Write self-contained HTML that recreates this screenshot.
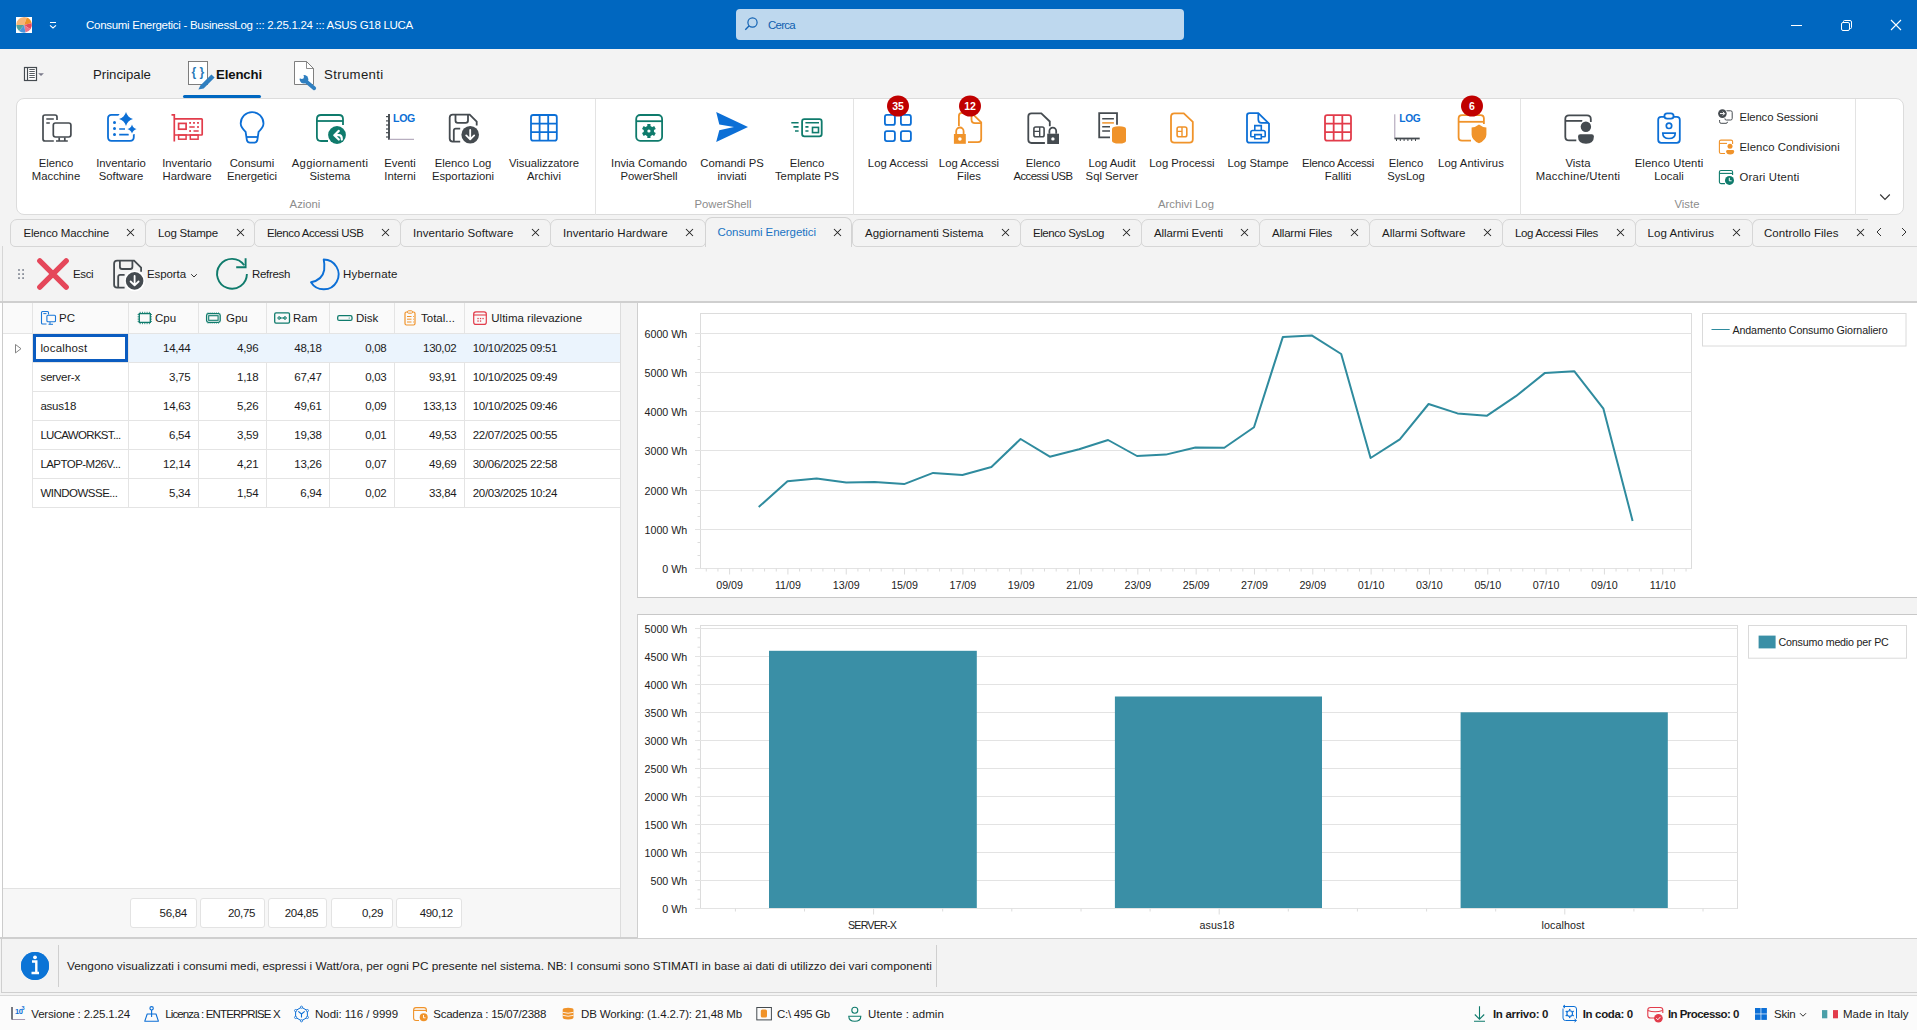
<!DOCTYPE html>
<html><head><meta charset="utf-8"><style>
html,body{margin:0;padding:0;width:1917px;height:1030px;overflow:hidden;background:#f3f3f3;font-family:"Liberation Sans",sans-serif;}
.b{position:absolute;}
.t{position:absolute;white-space:pre;}
svg.b{overflow:visible}
</style></head><body>
<div class="b" style="left:0px;top:0px;width:1917px;height:49px;background:#0067c0"></div>
<div class="b" style="left:736px;top:9px;width:448px;height:31px;background:#bed8ee;border-radius:4px"></div>
<div class="b" style="left:0px;top:49px;width:1917px;height:49px;background:#f3f3f3"></div>
<div class="b" style="left:183px;top:95px;width:78px;height:3px;background:#0067c0;border-radius:2px"></div>
<div class="b" style="left:16px;top:98px;width:1888px;height:117px;background:#fff;border:1px solid #dcdcdc;border-radius:8px;box-sizing:border-box"></div>
<div class="b" style="left:595px;top:99px;width:1px;height:116px;background:#e3e3e3"></div>
<div class="b" style="left:853px;top:99px;width:1px;height:116px;background:#e3e3e3"></div>
<div class="b" style="left:1520px;top:99px;width:1px;height:116px;background:#e3e3e3"></div>
<div class="b" style="left:1855px;top:99px;width:1px;height:116px;background:#e3e3e3"></div>
<div class="b" style="left:2px;top:246px;width:1915px;height:57px;background:#f3f3f3;border-left:1px solid #d6d6d6;box-sizing:border-box"></div>
<div class="b" style="left:1868px;top:246px;width:49px;height:1px;background:#d6d6d6"></div>
<div class="b" style="left:10px;top:219px;width:136px;height:28px;background:#f3f3f3;border:1px solid #d6d6d6;border-radius:7px 7px 5px 5px;box-sizing:border-box"></div>
<svg class="b" style="left:126px;top:228px" width="9" height="9" viewBox="0 0 9 9"><path d="M1 1L8 8M8 1L1 8" stroke="#222" stroke-width="1.05"/></svg>
<div class="b" style="left:145px;top:219px;width:110px;height:28px;background:#f3f3f3;border:1px solid #d6d6d6;border-radius:7px 7px 5px 5px;box-sizing:border-box"></div>
<svg class="b" style="left:236px;top:228px" width="9" height="9" viewBox="0 0 9 9"><path d="M1 1L8 8M8 1L1 8" stroke="#222" stroke-width="1.05"/></svg>
<div class="b" style="left:254px;top:219px;width:147px;height:28px;background:#f3f3f3;border:1px solid #d6d6d6;border-radius:7px 7px 5px 5px;box-sizing:border-box"></div>
<svg class="b" style="left:381px;top:228px" width="9" height="9" viewBox="0 0 9 9"><path d="M1 1L8 8M8 1L1 8" stroke="#222" stroke-width="1.05"/></svg>
<div class="b" style="left:400px;top:219px;width:151px;height:28px;background:#f3f3f3;border:1px solid #d6d6d6;border-radius:7px 7px 5px 5px;box-sizing:border-box"></div>
<svg class="b" style="left:531px;top:228px" width="9" height="9" viewBox="0 0 9 9"><path d="M1 1L8 8M8 1L1 8" stroke="#222" stroke-width="1.05"/></svg>
<div class="b" style="left:550px;top:219px;width:156px;height:28px;background:#f3f3f3;border:1px solid #d6d6d6;border-radius:7px 7px 5px 5px;box-sizing:border-box"></div>
<svg class="b" style="left:685px;top:228px" width="9" height="9" viewBox="0 0 9 9"><path d="M1 1L8 8M8 1L1 8" stroke="#222" stroke-width="1.05"/></svg>
<div class="b" style="left:705px;top:217px;width:147px;height:30px;background:#f3f3f3;border:1px solid #d3d3d3;border-bottom:none;border-radius:7px 7px 0 0;box-sizing:border-box"></div>
<svg class="b" style="left:833px;top:228px" width="9" height="9" viewBox="0 0 9 9"><path d="M1 1L8 8M8 1L1 8" stroke="#222" stroke-width="1.05"/></svg>
<div class="b" style="left:852px;top:219px;width:169px;height:28px;background:#f3f3f3;border:1px solid #d6d6d6;border-radius:7px 7px 5px 5px;box-sizing:border-box"></div>
<svg class="b" style="left:1001px;top:228px" width="9" height="9" viewBox="0 0 9 9"><path d="M1 1L8 8M8 1L1 8" stroke="#222" stroke-width="1.05"/></svg>
<div class="b" style="left:1020px;top:219px;width:122px;height:28px;background:#f3f3f3;border:1px solid #d6d6d6;border-radius:7px 7px 5px 5px;box-sizing:border-box"></div>
<svg class="b" style="left:1122px;top:228px" width="9" height="9" viewBox="0 0 9 9"><path d="M1 1L8 8M8 1L1 8" stroke="#222" stroke-width="1.05"/></svg>
<div class="b" style="left:1141px;top:219px;width:119px;height:28px;background:#f3f3f3;border:1px solid #d6d6d6;border-radius:7px 7px 5px 5px;box-sizing:border-box"></div>
<svg class="b" style="left:1240px;top:228px" width="9" height="9" viewBox="0 0 9 9"><path d="M1 1L8 8M8 1L1 8" stroke="#222" stroke-width="1.05"/></svg>
<div class="b" style="left:1259px;top:219px;width:111px;height:28px;background:#f3f3f3;border:1px solid #d6d6d6;border-radius:7px 7px 5px 5px;box-sizing:border-box"></div>
<svg class="b" style="left:1350px;top:228px" width="9" height="9" viewBox="0 0 9 9"><path d="M1 1L8 8M8 1L1 8" stroke="#222" stroke-width="1.05"/></svg>
<div class="b" style="left:1369px;top:219px;width:134px;height:28px;background:#f3f3f3;border:1px solid #d6d6d6;border-radius:7px 7px 5px 5px;box-sizing:border-box"></div>
<svg class="b" style="left:1483px;top:228px" width="9" height="9" viewBox="0 0 9 9"><path d="M1 1L8 8M8 1L1 8" stroke="#222" stroke-width="1.05"/></svg>
<div class="b" style="left:1502px;top:219px;width:134px;height:28px;background:#f3f3f3;border:1px solid #d6d6d6;border-radius:7px 7px 5px 5px;box-sizing:border-box"></div>
<svg class="b" style="left:1616px;top:228px" width="9" height="9" viewBox="0 0 9 9"><path d="M1 1L8 8M8 1L1 8" stroke="#222" stroke-width="1.05"/></svg>
<div class="b" style="left:1635px;top:219px;width:118px;height:28px;background:#f3f3f3;border:1px solid #d6d6d6;border-radius:7px 7px 5px 5px;box-sizing:border-box"></div>
<svg class="b" style="left:1732px;top:228px" width="9" height="9" viewBox="0 0 9 9"><path d="M1 1L8 8M8 1L1 8" stroke="#222" stroke-width="1.05"/></svg>
<div class="b" style="left:1752px;top:219px;width:116px;height:28px;background:#f3f3f3;border:1px solid #d6d6d6;border-right:none;border-radius:7px 0 0 5px;box-sizing:border-box"></div>
<svg class="b" style="left:1856px;top:228px" width="9" height="9" viewBox="0 0 9 9"><path d="M1 1L8 8M8 1L1 8" stroke="#222" stroke-width="1.05"/></svg>
<svg class="b" style="left:1875px;top:227px" width="9" height="10" viewBox="0 0 9 10"><path d="M6 1L2 5L6 9" fill="none" stroke="#333" stroke-width="1"/></svg>
<svg class="b" style="left:1899px;top:227px" width="9" height="10" viewBox="0 0 9 10"><path d="M3 1L7 5L3 9" fill="none" stroke="#333" stroke-width="1"/></svg>
<div class="b" style="left:0px;top:302px;width:637px;height:636px;background:#fff"></div>
<div class="b" style="left:0px;top:301px;width:1917px;height:2px;background:#cfcfcf"></div>
<div class="b" style="left:2px;top:302px;width:1px;height:636px;background:#cccccc"></div>
<div class="b" style="left:3px;top:303px;width:617px;height:30px;background:#fafafa"></div>
<div class="b" style="left:32px;top:333px;width:588px;height:1px;background:#e4e4e4"></div>
<div class="b" style="left:32px;top:362px;width:588px;height:1px;background:#e4e4e4"></div>
<div class="b" style="left:32px;top:391px;width:588px;height:1px;background:#e4e4e4"></div>
<div class="b" style="left:32px;top:420px;width:588px;height:1px;background:#e4e4e4"></div>
<div class="b" style="left:32px;top:449px;width:588px;height:1px;background:#e4e4e4"></div>
<div class="b" style="left:32px;top:478px;width:588px;height:1px;background:#e4e4e4"></div>
<div class="b" style="left:32px;top:507px;width:588px;height:1px;background:#e4e4e4"></div>
<div class="b" style="left:3px;top:333px;width:30px;height:1px;background:#e4e4e4"></div>
<div class="b" style="left:32px;top:303px;width:1px;height:204px;background:#e4e4e4"></div>
<div class="b" style="left:128px;top:303px;width:1px;height:204px;background:#e4e4e4"></div>
<div class="b" style="left:198px;top:303px;width:1px;height:204px;background:#e4e4e4"></div>
<div class="b" style="left:266px;top:303px;width:1px;height:204px;background:#e4e4e4"></div>
<div class="b" style="left:329px;top:303px;width:1px;height:204px;background:#e4e4e4"></div>
<div class="b" style="left:394px;top:303px;width:1px;height:204px;background:#e4e4e4"></div>
<div class="b" style="left:464px;top:303px;width:1px;height:204px;background:#e4e4e4"></div>
<div class="b" style="left:620px;top:303px;width:1px;height:635px;background:#dcdcdc"></div>
<div class="b" style="left:621px;top:303px;width:16px;height:635px;background:#f3f3f3"></div>
<div class="b" style="left:129px;top:334px;width:491px;height:28px;background:#ebf4fd"></div>
<div class="b" style="left:33px;top:334px;width:95px;height:28px;background:#fff;border:3px solid #0b5cc0;box-sizing:border-box"></div>
<div class="b" style="left:3px;top:888px;width:617px;height:50px;background:#f7f7f7;border-top:1px solid #e2e2e2;box-sizing:border-box"></div>
<div class="b" style="left:130px;top:898px;width:67px;height:30px;background:#fff;border:1px solid #e3e3e3;border-radius:3px;box-sizing:border-box"></div>
<div class="b" style="left:200px;top:898px;width:65px;height:30px;background:#fff;border:1px solid #e3e3e3;border-radius:3px;box-sizing:border-box"></div>
<div class="b" style="left:268px;top:898px;width:59px;height:30px;background:#fff;border:1px solid #e3e3e3;border-radius:3px;box-sizing:border-box"></div>
<div class="b" style="left:331px;top:898px;width:62px;height:30px;background:#fff;border:1px solid #e3e3e3;border-radius:3px;box-sizing:border-box"></div>
<div class="b" style="left:396px;top:898px;width:66px;height:30px;background:#fff;border:1px solid #e3e3e3;border-radius:3px;box-sizing:border-box"></div>
<div class="b" style="left:0px;top:937px;width:1917px;height:2px;background:#cfcfcf"></div>
<div class="b" style="left:637px;top:303px;width:1280px;height:295px;background:#fff;border-left:1px solid #cfcfcf;border-bottom:1px solid #c8c8c8;box-sizing:border-box"></div>
<div class="b" style="left:637px;top:614px;width:1280px;height:324px;background:#fff;border-left:1px solid #cfcfcf;border-top:1px solid #c8c8c8;box-sizing:border-box"></div>
<div class="b" style="left:0px;top:939px;width:1917px;height:55px;background:#f3f3f3;box-sizing:border-box"></div>
<div class="b" style="left:1px;top:939px;width:1px;height:54px;background:#cfcfcf"></div>
<div class="b" style="left:1px;top:992px;width:1916px;height:1px;background:#cfcfcf"></div>
<div class="b" style="left:58px;top:945px;width:1px;height:42px;background:#cfcfcf"></div>
<div class="b" style="left:21px;top:952px;width:28px;height:28px;background:#0c74d6;border-radius:50%"></div>
<div class="b" style="left:936px;top:945px;width:1px;height:42px;background:#cfcfcf"></div>
<div class="b" style="left:0px;top:995px;width:1917px;height:35px;background:#fbfbfb;border-top:1px solid #d8d8d8;box-sizing:border-box"></div>
<svg class="b" style="left:0;top:0" width="1917" height="1030" viewBox="0 0 1917 1030"><rect x="16" y="17" width="16" height="16" fill="#fff"/><path d="M24.1 24.9 L16.30 24.90 A7.8 7.8 0 0 1 26.77 17.57 Z" fill="#f7b577"/><path d="M24.1 24.9 L26.77 17.57 A7.8 7.8 0 0 1 31.63 22.88 Z" fill="#ef9329"/><path d="M24.1 24.9 L31.63 22.88 A7.8 7.8 0 0 1 30.49 29.37 Z" fill="#e64a5c"/><path d="M24.1 24.9 L30.49 29.37 A7.8 7.8 0 0 1 25.45 32.58 Z" fill="#ef7387"/><path d="M24.1 24.9 L25.45 32.58 A7.8 7.8 0 0 1 19.09 30.88 Z" fill="#4b96dc"/><path d="M24.1 24.9 L19.09 30.88 A7.8 7.8 0 0 1 16.30 24.90 Z" fill="#4fa29d"/><path d="M50 22.5H56M50 25.3L53 28L56 25.3" fill="none" stroke="#fff" stroke-width="1.1"/><circle cx="752.5" cy="22.5" r="4.6" fill="none" stroke="#1262b3" stroke-width="1.2"/><path d="M749.2 25.8L745.3 29.7" stroke="#1262b3" stroke-width="1.3"/><path d="M1791 25.5H1802" stroke="#fff" stroke-width="1"/><rect x="1841.5" y="22.5" width="8" height="8" rx="1.5" fill="none" stroke="#fff" stroke-width="1"/><path d="M1843.5 22.5V21.5Q1843.5 20.5 1844.5 20.5H1850Q1851.5 20.5 1851.5 22V27.5Q1851.5 28.5 1850.5 28.5H1849.5" fill="none" stroke="#fff" stroke-width="1"/><path d="M1891 20L1901 30M1901 20L1891 30" stroke="#fff" stroke-width="1.1"/><rect x="24.5" y="67.5" width="12" height="13" fill="#fff" stroke="#454b50" stroke-width="1.2"/><path d="M27.5 67.5V80.5" stroke="#454b50" stroke-width="1.2"/><path d="M29.3 69.5H34.8" stroke="#454b50" stroke-width="0.9"/><path d="M29.3 71.5H34.8" stroke="#454b50" stroke-width="0.9"/><path d="M29.3 73.5H34.8" stroke="#454b50" stroke-width="0.9"/><path d="M29.3 75.5H34.8" stroke="#454b50" stroke-width="0.9"/><path d="M29.3 77.5H34.8" stroke="#454b50" stroke-width="0.9"/><path d="M38.2 73.2H43.9L41 75.9Z" fill="#7a7a8a"/><rect x="188.5" y="61.5" width="19" height="23" fill="#fff" stroke="#707070" stroke-width="0.9"/><text x="197.8" y="75.8" font-family="Liberation Sans" font-size="12" font-weight="bold" fill="#2a7ab8" text-anchor="middle">{ }</text><path d="M211.4 74.4L214.6 77.6L203.6 88.6L198.4 89.4L200.4 85.4Z" fill="#2f7fc0"/><path d="M294.5 61.5H306.5L313.5 68.5V84.5H294.5Z" fill="#fff" stroke="#707070" stroke-width="0.9"/><path d="M306.5 61.5V68.5H313.5" fill="none" stroke="#707070" stroke-width="0.8"/><circle cx="304" cy="79.3" r="4.3" fill="#2f7fc0"/><circle cx="301.8" cy="76.8" r="2.2" fill="#fff"/><path d="M306.5 81.8L314.2 88.2" stroke="#2f7fc0" stroke-width="3.8" stroke-linecap="round"/><path d="M53.8 141H45Q43 141 43 139V117Q43 115 45 115H55Q57 115 57 117V120" fill="none" stroke="#454b50" stroke-width="1.7"/><path d="M46.3 119H53.8M46.3 123H49.8" fill="none" stroke="#454b50" stroke-width="1.7"/><rect x="53.3" y="123" width="17.6" height="14" rx="2.2" fill="none" stroke="#454b50" stroke-width="1.7"/><path d="M59.2 137.5V140.3M64.8 137.5V140.3M56 141H67.8" fill="none" stroke="#454b50" stroke-width="1.7"/><path d="M121 114.9H111.5Q108 114.9 108 118.5V137Q108 140.8 111.5 140.8H130Q133.8 140.8 133.8 137V134" fill="none" stroke="#0c6fd6" stroke-width="1.8"/><circle cx="114.5" cy="122.6" r="1.5" fill="#0c6fd6"/><circle cx="114.5" cy="128.4" r="1.5" fill="#0c6fd6"/><circle cx="114.5" cy="134.4" r="1.5" fill="#0c6fd6"/><path d="M119.2 122.6H121.5M119.2 129H125M119.2 134.7H128.7" fill="none" stroke="#0c6fd6" stroke-width="1.7"/><circle cx="126" cy="119" r="8.3" fill="#fff"/><circle cx="132" cy="129" r="5.5" fill="#fff"/><path d="M126 111.9Q127.54 117.36 133 118.9Q127.54 120.44000000000001 126 125.9Q124.46 120.44000000000001 119 118.9Q124.46 117.36 126 111.9Z" fill="#0c6fd6"/><path d="M132 124.4Q133.012 127.988 136.6 129Q133.012 130.012 132 133.6Q130.988 130.012 127.4 129Q130.988 127.988 132 124.4Z" fill="#0c6fd6"/><path d="M171.5 114.9H174.3V141.6" fill="none" stroke="#e23c4b" stroke-width="1.7"/><path d="M174.3 118.9H201.5Q202.2 118.9 202.2 119.6V134.3Q202.2 135 201.5 135H174.3" fill="none" stroke="#e23c4b" stroke-width="1.7"/><rect x="178.6" y="123.4" width="7.5" height="5.8" fill="none" stroke="#e23c4b" stroke-width="1.7"/><rect x="178.6" y="135" width="7.5" height="4.2" fill="none" stroke="#e23c4b" stroke-width="1.5"/><rect x="190.3" y="135" width="7.8" height="4.2" fill="none" stroke="#e23c4b" stroke-width="1.5"/><rect x="189.2" y="122.0" width="1.8" height="1.8" fill="#e23c4b"/><rect x="193.1" y="122.0" width="1.8" height="1.8" fill="#e23c4b"/><rect x="197.1" y="122.0" width="1.8" height="1.8" fill="#e23c4b"/><rect x="197.1" y="126.1" width="1.8" height="1.8" fill="#e23c4b"/><rect x="189.2" y="130.1" width="1.8" height="1.8" fill="#e23c4b"/><path d="M189.3 127H194.7M193.5 131H198.7" fill="none" stroke="#e23c4b" stroke-width="1.7"/><path d="M245.6 131.8C242.5 128.8 240.7 126.3 240.7 123.5A11.4 11.4 0 0 1 263.5 123.5C263.5 126.3 261.7 128.8 258.6 131.8L257.3 140.3Q256.7 142.6 254.3 142.6H249.9Q247.5 142.6 246.9 140.3Z" fill="none" stroke="#0c6fd6" stroke-width="1.8"/><path d="M246.3 137H258" fill="none" stroke="#0c6fd6" stroke-width="1.8"/><path d="M328 141H321Q316.9 141 316.9 137V119Q316.9 115 321 115H339Q343 115 343 119V125" fill="none" stroke="#0f7b6c" stroke-width="1.8"/><path d="M316.9 121H343" fill="none" stroke="#0f7b6c" stroke-width="1.8"/><circle cx="337" cy="135" r="10.5" fill="#fff"/><circle cx="337" cy="135" r="8.9" fill="#0f7b6c"/><path d="M338.8 130.9L334.3 135.2L338.8 139.5M334.8 135.2H338.8Q341.8 135.2 341.8 139.2V139.6" fill="none" stroke="#fff" stroke-width="2.2" stroke-linecap="round" stroke-linejoin="round"/><path d="M389 114V139.8" stroke="#454b50" stroke-width="1.9"/><path d="M386 116.6H389" stroke="#454b50" stroke-width="1.2"/><path d="M386 120.9H389" stroke="#454b50" stroke-width="1.2"/><path d="M386 125H389" stroke="#454b50" stroke-width="1.2"/><path d="M386 129H389" stroke="#454b50" stroke-width="1.2"/><path d="M386 132.7H389" stroke="#454b50" stroke-width="1.2"/><path d="M386 137H389" stroke="#454b50" stroke-width="1.2"/><path d="M389 139.3H414" stroke="#9d8fa8" stroke-width="0.9"/><text x="404" y="122.2" font-family="Liberation Sans" font-weight="bold" font-size="10.6" fill="#0c6fd6" text-anchor="middle" letter-spacing="-0.3">LOG</text><g transform="translate(449.2 114.1) scale(1.0)"><path d="M11 27.5H3.5Q0.5 27.5 0.5 24.5V3.5Q0.5 0.5 3.5 0.5H20.5L27.5 7.5V11.5" fill="none" stroke="#454b50" stroke-width="1.8"/><path d="M6.3 0.5V6.5Q6.3 8.8 8.5 8.8H16.5Q18.8 8.8 18.8 6.5V0.5" fill="none" stroke="#454b50" stroke-width="1.8"/><path d="M11 14.6H6.5Q4.6 14.6 4.6 16.5V27.5" fill="none" stroke="#454b50" stroke-width="1.8"/><circle cx="21" cy="20.7" r="10.4" fill="#fff"/><circle cx="21" cy="20.7" r="8.8" fill="#454b50"/><path d="M21 15.8V25M17 21.3L21 25.2L25 21.3" fill="none" stroke="#fff" stroke-width="1.8" stroke-linecap="round" stroke-linejoin="round"/></g><rect x="531" y="115" width="25.799999999999955" height="25.69999999999999" rx="2.2" fill="none" stroke="#0c6fd6" stroke-width="1.8"/><path d="M539.60 115V140.7M531 123.57H556.8" fill="none" stroke="#0c6fd6" stroke-width="1.8"/><path d="M548.20 115V140.7M531 132.13H556.8" fill="none" stroke="#0c6fd6" stroke-width="1.8"/><rect x="636.2" y="115" width="25.9" height="25.8" rx="4" fill="none" stroke="#0f7b6c" stroke-width="1.8"/><path d="M636.2 121.2H662.1" fill="none" stroke="#0f7b6c" stroke-width="1.8"/><rect x="-1.6" y="-7" width="3.2" height="3" transform="translate(648.9 131) rotate(0)" fill="#0f7b6c"/><rect x="-1.6" y="-7" width="3.2" height="3" transform="translate(648.9 131) rotate(60)" fill="#0f7b6c"/><rect x="-1.6" y="-7" width="3.2" height="3" transform="translate(648.9 131) rotate(120)" fill="#0f7b6c"/><rect x="-1.6" y="-7" width="3.2" height="3" transform="translate(648.9 131) rotate(180)" fill="#0f7b6c"/><rect x="-1.6" y="-7" width="3.2" height="3" transform="translate(648.9 131) rotate(240)" fill="#0f7b6c"/><rect x="-1.6" y="-7" width="3.2" height="3" transform="translate(648.9 131) rotate(300)" fill="#0f7b6c"/><circle cx="648.9" cy="131" r="5.2" fill="#0f7b6c"/><circle cx="648.9" cy="131" r="1.6" fill="#fff"/><path d="M716.2 112L748 126.9L716.2 142L719.3 130.2L734 127L719.3 124.6Z" fill="#0c6fd6"/><rect x="802.1" y="119.2" width="19.6" height="17.2" rx="2.3" fill="none" stroke="#0f7b6c" stroke-width="1.8"/><path d="M791.3 122.7H798.6M793.4 126.9H798.6M795 131H798.6M805.4 122.7H819M805.4 126.9H808.5M805.4 131H808.5" fill="none" stroke="#0f7b6c" stroke-width="1.6"/><rect x="812.5" y="127.4" width="6" height="5.2" fill="none" stroke="#0f7b6c" stroke-width="1.6"/><rect x="884.9" y="114.9" width="10" height="10" rx="2" fill="none" stroke="#0c6fd6" stroke-width="1.8"/><rect x="884.9" y="131.1" width="10" height="10" rx="2" fill="none" stroke="#0c6fd6" stroke-width="1.8"/><rect x="900.9" y="114.9" width="10" height="10" rx="2" fill="none" stroke="#0c6fd6" stroke-width="1.8"/><rect x="900.9" y="131.1" width="10" height="10" rx="2" fill="none" stroke="#0c6fd6" stroke-width="1.8"/><path d="M958.9 126V116Q958.9 112.8 962 112.8H971.5L981.2 122.3V139Q981.2 142.2 978 142.2H968" fill="none" stroke="#f0932a" stroke-width="1.8"/><path d="M971.5 113V119.5Q971.5 123.1 975 123.1H981" fill="none" stroke="#f0932a" stroke-width="1.8"/><path d="M956.2 134V131.2A3.7 3.7 0 0 1 963.6 131.2V134" fill="none" stroke="#f0932a" stroke-width="1.8"/><rect x="953.9" y="134" width="11.9" height="9.8" fill="#f0932a"/><circle cx="959.9" cy="139" r="1.8" fill="#fff"/><path d="M1044.9 143H1031.5Q1028.3 143 1028.3 139.8V116.5Q1028.3 113.3 1031.5 113.3H1041.3L1049.8 121.5V126.2" fill="none" stroke="#454b50" stroke-width="1.8"/><rect x="1033.9" y="127" width="10.2" height="9.8" rx="1.8" fill="none" stroke="#454b50" stroke-width="1.6"/><path d="M1039.7 127V136.8M1033.9 131.4H1039.7" fill="none" stroke="#454b50" stroke-width="1.4"/><path d="M1049.4 133.7V131A3.4 3.4 0 0 1 1056.2 131V133.7" fill="none" stroke="#454b50" stroke-width="1.8"/><rect x="1047.2" y="133.7" width="11.8" height="10.3" fill="#454b50"/><circle cx="1052.9" cy="138.9" r="1.7" fill="#fff"/><path d="M1110 137.3H1099.2V113.2H1117V126" fill="none" stroke="#454b50" stroke-width="1.8"/><path d="M1102.2 118.7H1113.9M1102.2 126.8H1110M1102.2 130.9H1110" fill="none" stroke="#454b50" stroke-width="1.5"/><path d="M1102.2 122.9H1113.9" fill="none" stroke="#f0932a" stroke-width="1.5"/><rect x="1110.5" y="124.8" width="17" height="20.2" rx="4" fill="#fff"/><path d="M1112 129Q1112 126.2 1119 126.2Q1126 126.2 1126 129V140.8Q1126 143.6 1119 143.6Q1112 143.6 1112 140.8Z" fill="#f0932a"/><path d="M1174.4 113.3H1183.8L1192.8 121.8V139.3Q1192.8 142.7 1189.4 142.7H1174.4Q1171 142.7 1171 139.3V116.7Q1171 113.3 1174.4 113.3Z" fill="none" stroke="#f0932a" stroke-width="1.8"/><rect x="1177.1" y="127" width="9.7" height="9.7" rx="1.8" fill="none" stroke="#f0932a" stroke-width="1.6"/><path d="M1182 127V136.7M1177.1 131.4H1182" fill="none" stroke="#f0932a" stroke-width="1.4"/><path d="M1249.5 113.2H1258.3L1269 123.6V140.4Q1269 142.6 1266.8 142.6H1249.5Q1247 142.6 1247 140.4V115.6Q1247 113.2 1249.5 113.2Z" fill="none" stroke="#0c6fd6" stroke-width="1.8"/><path d="M1258.3 113.5V119.5Q1258.3 122.9 1261.5 122.9H1268.6" fill="none" stroke="#0c6fd6" stroke-width="1.7"/><path d="M1254.8 130V125.6H1261.3V130M1254.3 136.8H1251.5Q1250.8 136.8 1250.8 136V132.5Q1250.8 130.5 1252.8 130.5H1263.2Q1265.2 130.5 1265.2 132.5V136Q1265.2 136.8 1264.5 136.8H1261.7M1254.8 134.6H1261.3V138.8H1254.8Z" fill="none" stroke="#0c6fd6" stroke-width="1.6"/><rect x="1325" y="115.2" width="26" height="25.39999999999999" rx="2.2" fill="none" stroke="#e23c4b" stroke-width="1.8"/><path d="M1333.67 115.2V140.6M1325 123.67H1351" fill="none" stroke="#e23c4b" stroke-width="1.8"/><path d="M1342.33 115.2V140.6M1325 132.13H1351" fill="none" stroke="#e23c4b" stroke-width="1.8"/><path d="M1394.8 114.3V138.8" stroke="#9d8fa8" stroke-width="0.9"/><path d="M1394.6 138.5H1419.7" stroke="#454b50" stroke-width="1.8"/><path d="M1396.5 139V141" stroke="#454b50" stroke-width="1"/><path d="M1400.3 139V141" stroke="#454b50" stroke-width="1"/><path d="M1404.1 139V141" stroke="#454b50" stroke-width="1"/><path d="M1407.9 139V141" stroke="#454b50" stroke-width="1"/><path d="M1411.7 139V141" stroke="#454b50" stroke-width="1"/><path d="M1415.5 139V141" stroke="#454b50" stroke-width="1"/><text x="1409.8" y="121.8" font-family="Liberation Sans" font-weight="bold" font-size="10.2" fill="#0c6fd6" text-anchor="middle" letter-spacing="-0.3">LOG</text><path d="M1471 140.6H1462Q1458.6 140.6 1458.6 137.2V118.6Q1458.6 115.2 1462 115.2H1480.5Q1483.9 115.2 1483.9 118.6V124" fill="none" stroke="#f0932a" stroke-width="1.8"/><path d="M1458.6 121.8H1483.9" fill="none" stroke="#f0932a" stroke-width="1.8"/><path d="M1479 123Q1475 126.5 1470.5 126.5V134.5Q1470.5 141 1479 144.5Q1487.5 141 1487.5 134.5V126.5Q1483 126.5 1479 123Z" fill="#fff"/><path d="M1479 124.6Q1475.5 127.5 1471.6 127.5V134.5Q1471.6 140 1479 143.3Q1486.4 140 1486.4 134.5V127.5Q1482.5 127.5 1479 124.6Z" fill="#f0932a"/><path d="M1576.3 140.4H1569Q1565.3 140.4 1565.3 136.7V119Q1565.3 115.3 1569 115.3H1587Q1590.8 115.3 1590.8 119V121.9" fill="none" stroke="#454b50" stroke-width="1.8"/><path d="M1565.3 120.9H1582.3" fill="none" stroke="#454b50" stroke-width="1.8"/><circle cx="1585.9" cy="126.8" r="6.6" fill="#fff"/><circle cx="1585.9" cy="126.8" r="5.2" fill="#454b50"/><path d="M1578 136.5Q1578 134.2 1580.3 134.2H1591.6Q1593.9 134.2 1593.9 136.5Q1593.9 143.7 1586 143.7Q1578 143.7 1578 136.5Z" fill="#454b50"/><rect x="1658.2" y="116.8" width="21.6" height="26" rx="3" fill="none" stroke="#0c6fd6" stroke-width="1.8"/><rect x="1664.4" y="113.3" width="9.2" height="5.4" rx="2.7" fill="#fff" fill="none" stroke="#0c6fd6" stroke-width="1.8"/><circle cx="1669" cy="125.8" r="2.7" fill="none" stroke="#0c6fd6" stroke-width="1.7"/><path d="M1662.8 133.2H1675.2Q1675.2 138.5 1669 138.5Q1662.8 138.5 1662.8 133.2Z" fill="none" stroke="#0c6fd6" stroke-width="1.7"/><rect x="1724.8" y="110.8" width="7.4" height="9.2" rx="1.5" fill="none" stroke="#454b50" stroke-width="1"/><path d="M1719.6 120V121.8Q1719.6 123.3 1721.1 123.3H1726Q1727.5 123.3 1727.5 121.8" fill="none" stroke="#454b50" stroke-width="1"/><circle cx="1722.4" cy="113.6" r="5.2" fill="#fff"/><circle cx="1722.4" cy="113.6" r="4.3" fill="#454b50"/><path d="M1720 113.6H1724.6M1722.8 111.7L1724.7 113.6L1722.8 115.5" fill="none" stroke="#fff" stroke-width="1"/><path d="M1725 153.5H1721Q1719.4 153.5 1719.4 152V141.6Q1719.4 140.1 1721 140.1H1731Q1732.6 140.1 1732.6 141.6V144" fill="none" stroke="#f0932a" stroke-width="1.1"/><path d="M1719.4 143.4H1727" fill="none" stroke="#f0932a" stroke-width="1.1"/><circle cx="1730" cy="146.2" r="2.5" fill="#f0932a"/><path d="M1726.2 151.3Q1726.2 150 1727.5 150H1732.8Q1734.1 150 1734.1 151.3Q1734.1 154.6 1730.1 154.6Q1726.2 154.6 1726.2 151.3Z" fill="#f0932a"/><path d="M1725 183.6H1721Q1719.4 183.6 1719.4 182V172Q1719.4 170.5 1721 170.5H1731Q1732.6 170.5 1732.6 172V175" fill="none" stroke="#0f7b6c" stroke-width="1.1"/><path d="M1719.4 173.4H1732.6" fill="none" stroke="#0f7b6c" stroke-width="1.1"/><circle cx="1729.5" cy="180.4" r="5.3" fill="#fff"/><circle cx="1729.5" cy="180.4" r="4.5" fill="#0f7b6c"/><path d="M1729.3 177.8V180.8H1731.6" fill="none" stroke="#fff" stroke-width="1"/><path d="M1880.2 194.5L1885 199.5L1889.8 194.5" fill="none" stroke="#333" stroke-width="1.1"/><rect x="18.1" y="269.1" width="1.8" height="1.8" fill="#8a8f9a"/><rect x="18.1" y="273.20000000000005" width="1.8" height="1.8" fill="#8a8f9a"/><rect x="18.1" y="277.20000000000005" width="1.8" height="1.8" fill="#8a8f9a"/><rect x="22.200000000000003" y="269.1" width="1.8" height="1.8" fill="#8a8f9a"/><rect x="22.200000000000003" y="273.20000000000005" width="1.8" height="1.8" fill="#8a8f9a"/><rect x="22.200000000000003" y="277.20000000000005" width="1.8" height="1.8" fill="#8a8f9a"/><path d="M39.8 260.8L66.2 287.2M66.2 260.8L39.8 287.2" stroke="#e5475a" stroke-width="5.4" stroke-linecap="round"/><g transform="translate(113.6 260.2) scale(1.0)"><path d="M11 27.5H3.5Q0.5 27.5 0.5 24.5V3.5Q0.5 0.5 3.5 0.5H20.5L27.5 7.5V11.5" fill="none" stroke="#454b50" stroke-width="1.8"/><path d="M6.3 0.5V6.5Q6.3 8.8 8.5 8.8H16.5Q18.8 8.8 18.8 6.5V0.5" fill="none" stroke="#454b50" stroke-width="1.8"/><path d="M11 14.6H6.5Q4.6 14.6 4.6 16.5V27.5" fill="none" stroke="#454b50" stroke-width="1.8"/><circle cx="21" cy="20.7" r="10.4" fill="#fff"/><circle cx="21" cy="20.7" r="8.8" fill="#454b50"/><path d="M21 15.8V25M17 21.3L21 25.2L25 21.3" fill="none" stroke="#fff" stroke-width="1.8" stroke-linecap="round" stroke-linejoin="round"/></g><path d="M191.2 274.2L194 277L196.8 274.2" fill="none" stroke="#333" stroke-width="1"/><path d="M246.9 273.9A14.9 14.9 0 1 1 244.2 265.2" fill="none" stroke="#0f7b6c" stroke-width="1.9"/><path d="M236.2 267.2H245.6V258.3" fill="none" stroke="#0f7b6c" stroke-width="1.9"/><path d="M323.7 259.5A14.9 14.9 0 1 1 311 282.2Q322.5 280 324.2 270Q324.8 264 323.7 259.5Z" fill="none" stroke="#0c6fd6" stroke-width="1.9" stroke-linejoin="round"/><path d="M15.5 344.5L21 348.7L15.5 352.9Z" fill="none" stroke="#777" stroke-width="0.9"/><path d="M46.5 324H42.5Q41.5 324 41.5 323V312.5Q41.5 311.5 42.5 311.5H47.5Q48.5 311.5 48.5 312.5V314.5" fill="none" stroke="#1a77d8" stroke-width="1.1"/><path d="M43.3 313.6H46.5" fill="none" stroke="#1a77d8" stroke-width="1"/><rect x="46.9" y="315.3" width="8.6" height="6.4" rx="1" fill="none" stroke="#1a77d8" stroke-width="1.1"/><path d="M50 322V324M48.5 324.3H53" fill="none" stroke="#1a77d8" stroke-width="1"/><rect x="139.3" y="313.6" width="11" height="8.8" fill="none" stroke="#0f7b6c" stroke-width="1.3"/><path d="M140.2 311.8V313.6M140.2 322.4V324.2" stroke="#0f7b6c" stroke-width="0.8"/><path d="M142.5 311.8V313.6M142.5 322.4V324.2" stroke="#0f7b6c" stroke-width="0.8"/><path d="M144.8 311.8V313.6M144.8 322.4V324.2" stroke="#0f7b6c" stroke-width="0.8"/><path d="M147.1 311.8V313.6M147.1 322.4V324.2" stroke="#0f7b6c" stroke-width="0.8"/><path d="M149.4 311.8V313.6M149.4 322.4V324.2" stroke="#0f7b6c" stroke-width="0.8"/><path d="M137.6 314.5H139.3M150.3 314.5H152" stroke="#0f7b6c" stroke-width="0.8"/><path d="M137.6 316.8H139.3M150.3 316.8H152" stroke="#0f7b6c" stroke-width="0.8"/><path d="M137.6 319.1H139.3M150.3 319.1H152" stroke="#0f7b6c" stroke-width="0.8"/><path d="M137.6 321.4H139.3M150.3 321.4H152" stroke="#0f7b6c" stroke-width="0.8"/><rect x="206.6" y="313.6" width="13.6" height="8.8" rx="1.8" fill="none" stroke="#0f7b6c" stroke-width="1.3"/><rect x="208.7" y="315.7" width="9.4" height="4.6" fill="none" stroke="#0f7b6c" stroke-width="1.1"/><path d="M208.0 312.4V313.4M208.0 322.6V323.6" stroke="#0f7b6c" stroke-width="0.7"/><path d="M210.1 312.4V313.4M210.1 322.6V323.6" stroke="#0f7b6c" stroke-width="0.7"/><path d="M212.2 312.4V313.4M212.2 322.6V323.6" stroke="#0f7b6c" stroke-width="0.7"/><path d="M214.3 312.4V313.4M214.3 322.6V323.6" stroke="#0f7b6c" stroke-width="0.7"/><path d="M216.4 312.4V313.4M216.4 322.6V323.6" stroke="#0f7b6c" stroke-width="0.7"/><path d="M218.5 312.4V313.4M218.5 322.6V323.6" stroke="#0f7b6c" stroke-width="0.7"/><rect x="274.7" y="312.9" width="14.8" height="10.2" rx="1.3" fill="none" stroke="#0f7b6c" stroke-width="1.3"/><path d="M278.8 318H285.5" fill="none" stroke="#0f7b6c" stroke-width="1"/><circle cx="279.2" cy="318" r="1.3" fill="none" stroke="#0f7b6c" stroke-width="1"/><circle cx="285" cy="318" r="1.3" fill="none" stroke="#0f7b6c" stroke-width="1"/><rect x="337.7" y="315.7" width="14.3" height="4.7" rx="1.5" fill="none" stroke="#0f7b6c" stroke-width="1.3"/><circle cx="349.2" cy="318" r="0.6" fill="#0f7b6c"/><rect x="405" y="312" width="10" height="13" rx="1.5" fill="none" stroke="#f0932a" stroke-width="1.2"/><rect x="407.5" y="310.8" width="5" height="2.4" rx="1" fill="#fafafa" fill="none" stroke="#f0932a" stroke-width="1"/><path d="M407 316.5H411.5M407 319.2H411.5M407 322H411.5M413 316.5H413.8M413 319.2H413.8M413 322H413.8" fill="none" stroke="#f0932a" stroke-width="1"/><rect x="473.7" y="311.8" width="12.6" height="12.6" rx="2.2" fill="none" stroke="#e23c4b" stroke-width="1.2"/><path d="M473.7 315H486.3" fill="none" stroke="#e23c4b" stroke-width="1.1"/><rect x="477.4" y="317.9" width="1.3" height="1.3" fill="#e23c4b"/><rect x="479.9" y="317.9" width="1.3" height="1.3" fill="#e23c4b"/><rect x="482.4" y="317.9" width="1.3" height="1.3" fill="#e23c4b"/><rect x="477.4" y="320.4" width="1.3" height="1.3" fill="#e23c4b"/><rect x="479.9" y="320.4" width="1.3" height="1.3" fill="#e23c4b"/><circle cx="35" cy="966" r="14" fill="#0c74d6"/><circle cx="35" cy="957.3" r="1.9" fill="#fff"/><path d="M32 961.5H36.3V972.5M31.5 973H39" fill="none" stroke="#fff" stroke-width="2.4"/><path d="M12 1007V1019.5H25.1" fill="none" stroke="#9d8fa8" stroke-width="0.9"/><path d="M12 1007V1019.5" stroke="#454b50" stroke-width="1.3"/><text x="15" y="1013.8" font-family="Liberation Sans" font-size="7.5" font-weight="bold" fill="#0c6fd6" letter-spacing="-0.4">10</text><text x="21.5" y="1010" font-family="Liberation Sans" font-size="5.5" font-weight="bold" fill="#0c6fd6">3</text><circle cx="151.6" cy="1008.3" r="1.7" fill="none" stroke="#0c6fd6" stroke-width="1.1"/><path d="M151.6 1010V1017M147.2 1014H156L158.4 1021.2H144.8Z" fill="none" stroke="#0c6fd6" stroke-width="1.1" stroke-linejoin="round"/><path d="M301.50 1007.20 L307.39 1010.60 L307.39 1017.40 L301.50 1020.80 L295.61 1017.40 L295.61 1010.60Z" fill="none" stroke="#0c6fd6" stroke-width="1"/><circle cx="301.50" cy="1007.20" r="1.1" fill="#fbfbfb" stroke="#0c6fd6" stroke-width="0.8"/><circle cx="307.39" cy="1010.60" r="1.1" fill="#fbfbfb" stroke="#0c6fd6" stroke-width="0.8"/><circle cx="307.39" cy="1017.40" r="1.1" fill="#fbfbfb" stroke="#0c6fd6" stroke-width="0.8"/><circle cx="301.50" cy="1020.80" r="1.1" fill="#fbfbfb" stroke="#0c6fd6" stroke-width="0.8"/><circle cx="295.61" cy="1017.40" r="1.1" fill="#fbfbfb" stroke="#0c6fd6" stroke-width="0.8"/><circle cx="295.61" cy="1010.60" r="1.1" fill="#fbfbfb" stroke="#0c6fd6" stroke-width="0.8"/><path d="M298.3 1011.3L301.5 1014L304.7 1011.3M301.5 1014V1017.5" fill="none" stroke="#0c6fd6" stroke-width="1.1"/><path d="M419 1020.5H416Q413.6 1020.5 413.6 1018V1010Q413.6 1007.6 416 1007.6H424Q426.4 1007.6 426.4 1010V1012" fill="none" stroke="#f0932a" stroke-width="1.1"/><path d="M413.6 1010.4H426.4" fill="none" stroke="#f0932a" stroke-width="1.1"/><circle cx="423.7" cy="1017.3" r="4.8" fill="#fbfbfb"/><circle cx="423.7" cy="1017.3" r="4" fill="#f0932a"/><path d="M423.5 1015V1017.8H425.5" fill="none" stroke="#fff" stroke-width="0.9"/><path d="M562.7 1009.7Q562.7 1007.8 568.1 1007.8Q573.5 1007.8 573.5 1009.7V1017.6Q573.5 1019.5 568.1 1019.5Q562.7 1019.5 562.7 1017.6Z" fill="#f0932a"/><path d="M562.7 1012.3Q568.1 1014.2 573.5 1012.3M562.7 1015.3Q568.1 1017.2 573.5 1015.3" fill="none" stroke="#fbfbfb" stroke-width="0.9"/><rect x="756.8" y="1007.5" width="14.6" height="12.4" fill="none" stroke="#454b50" stroke-width="1"/><rect x="760.8" y="1009.5" width="6.2" height="8" rx="1.5" fill="#f0932a"/><circle cx="854.8" cy="1010.3" r="3" fill="none" stroke="#0f7b6c" stroke-width="1.1"/><path d="M848.8 1016.2H860.8Q860.8 1021.2 854.8 1021.2Q848.8 1021.2 848.8 1016.2Z" fill="none" stroke="#0f7b6c" stroke-width="1.1"/><path d="M1479.5 1006.2V1019M1474.8 1014.5L1479.5 1019.2L1484.2 1014.5M1474 1021.3H1485" fill="none" stroke="#0f7b6c" stroke-width="1.1"/><circle cx="1569.7" cy="1013.5" r="2.8" fill="none" stroke="#0c6fd6" stroke-width="1.1"/><rect x="-0.7" y="-4.6" width="1.4" height="1.6" transform="translate(1569.7 1013.5) rotate(0)" fill="#0c6fd6"/><rect x="-0.7" y="-4.6" width="1.4" height="1.6" transform="translate(1569.7 1013.5) rotate(60)" fill="#0c6fd6"/><rect x="-0.7" y="-4.6" width="1.4" height="1.6" transform="translate(1569.7 1013.5) rotate(120)" fill="#0c6fd6"/><rect x="-0.7" y="-4.6" width="1.4" height="1.6" transform="translate(1569.7 1013.5) rotate(180)" fill="#0c6fd6"/><rect x="-0.7" y="-4.6" width="1.4" height="1.6" transform="translate(1569.7 1013.5) rotate(240)" fill="#0c6fd6"/><rect x="-0.7" y="-4.6" width="1.4" height="1.6" transform="translate(1569.7 1013.5) rotate(300)" fill="#0c6fd6"/><path d="M1563 1008.5V1018Q1563 1020.5 1565.5 1020.5H1576M1576.5 1018.5V1009Q1576.5 1006.5 1574 1006.5H1563.5M1574.5 1019L1576.5 1020.5L1574.5 1022M1565 1005L1563 1006.5L1565 1008" fill="none" stroke="#0c6fd6" stroke-width="1"/><path d="M1655 1018H1650.5Q1647.8 1018 1647.8 1015.5V1010Q1647.8 1007.5 1650.5 1007.5H1660.2Q1662.8 1007.5 1662.8 1010V1013" fill="none" stroke="#e23c4b" stroke-width="1.1"/><path d="M1647.8 1010.5Q1655 1013 1662.5 1010.5" fill="none" stroke="#e23c4b" stroke-width="1.1"/><circle cx="1658.4" cy="1018.2" r="4.3" fill="#e23c4b"/><path d="M1656.3 1018.2L1657.8 1019.7L1660.6 1016.8" fill="none" stroke="#fff" stroke-width="1"/><rect x="1755" y="1008" width="5.6" height="5.6" fill="#0c6fd6"/><rect x="1761.3" y="1008" width="5.6" height="5.6" fill="#0c6fd6"/><rect x="1755" y="1014.3" width="5.6" height="5.6" fill="#0c6fd6"/><rect x="1761.3" y="1014.3" width="5.6" height="5.6" fill="#0c6fd6"/><path d="M1800 1013.2L1803 1016.2L1806 1013.2" fill="none" stroke="#333" stroke-width="1"/><rect x="1822" y="1010.1" width="5.3" height="8.2" fill="#4a9fa8"/><rect x="1833" y="1010.1" width="5" height="8.2" fill="#e23c4b"/><ellipse cx="898" cy="106" rx="11" ry="10.6" fill="#c00000"/><ellipse cx="970" cy="106" rx="11" ry="10.6" fill="#c00000"/><ellipse cx="1472" cy="106" rx="11" ry="10.6" fill="#c00000"/></svg>
<svg class="b" style="left:0;top:0" width="1917" height="1030" viewBox="0 0 1917 1030"><rect x="700.5" y="313.5" width="991.0" height="255.0" fill="#fff" stroke="#dcdcdc" stroke-width="1"/><line x1="695" y1="568.5" x2="1691.5" y2="568.5" stroke="#e3e3e3" stroke-width="1"/><line x1="695" y1="529.5" x2="1691.5" y2="529.5" stroke="#e3e3e3" stroke-width="1"/><line x1="695" y1="490.5" x2="1691.5" y2="490.5" stroke="#e3e3e3" stroke-width="1"/><line x1="695" y1="450.5" x2="1691.5" y2="450.5" stroke="#e3e3e3" stroke-width="1"/><line x1="695" y1="411.5" x2="1691.5" y2="411.5" stroke="#e3e3e3" stroke-width="1"/><line x1="695" y1="372.5" x2="1691.5" y2="372.5" stroke="#e3e3e3" stroke-width="1"/><line x1="695" y1="333.5" x2="1691.5" y2="333.5" stroke="#e3e3e3" stroke-width="1"/><line x1="697.5" y1="555.5" x2="700.5" y2="555.5" stroke="#dcdcdc" stroke-width="1"/><line x1="697.5" y1="542.5" x2="700.5" y2="542.5" stroke="#dcdcdc" stroke-width="1"/><line x1="697.5" y1="516.5" x2="700.5" y2="516.5" stroke="#dcdcdc" stroke-width="1"/><line x1="697.5" y1="503.5" x2="700.5" y2="503.5" stroke="#dcdcdc" stroke-width="1"/><line x1="697.5" y1="477.5" x2="700.5" y2="477.5" stroke="#dcdcdc" stroke-width="1"/><line x1="697.5" y1="464.5" x2="700.5" y2="464.5" stroke="#dcdcdc" stroke-width="1"/><line x1="697.5" y1="437.5" x2="700.5" y2="437.5" stroke="#dcdcdc" stroke-width="1"/><line x1="697.5" y1="424.5" x2="700.5" y2="424.5" stroke="#dcdcdc" stroke-width="1"/><line x1="697.5" y1="398.5" x2="700.5" y2="398.5" stroke="#dcdcdc" stroke-width="1"/><line x1="697.5" y1="385.5" x2="700.5" y2="385.5" stroke="#dcdcdc" stroke-width="1"/><line x1="697.5" y1="359.5" x2="700.5" y2="359.5" stroke="#dcdcdc" stroke-width="1"/><line x1="697.5" y1="346.5" x2="700.5" y2="346.5" stroke="#dcdcdc" stroke-width="1"/><line x1="706.27" y1="568.5" x2="706.27" y2="571.5" stroke="#dcdcdc" stroke-width="1"/><line x1="717.94" y1="568.5" x2="717.94" y2="571.5" stroke="#dcdcdc" stroke-width="1"/><line x1="729.60" y1="568.5" x2="729.60" y2="574.5" stroke="#dcdcdc" stroke-width="1"/><line x1="741.26" y1="568.5" x2="741.26" y2="571.5" stroke="#dcdcdc" stroke-width="1"/><line x1="752.93" y1="568.5" x2="752.93" y2="571.5" stroke="#dcdcdc" stroke-width="1"/><line x1="764.59" y1="568.5" x2="764.59" y2="571.5" stroke="#dcdcdc" stroke-width="1"/><line x1="776.26" y1="568.5" x2="776.26" y2="571.5" stroke="#dcdcdc" stroke-width="1"/><line x1="787.92" y1="568.5" x2="787.92" y2="574.5" stroke="#dcdcdc" stroke-width="1"/><line x1="799.58" y1="568.5" x2="799.58" y2="571.5" stroke="#dcdcdc" stroke-width="1"/><line x1="811.25" y1="568.5" x2="811.25" y2="571.5" stroke="#dcdcdc" stroke-width="1"/><line x1="822.91" y1="568.5" x2="822.91" y2="571.5" stroke="#dcdcdc" stroke-width="1"/><line x1="834.58" y1="568.5" x2="834.58" y2="571.5" stroke="#dcdcdc" stroke-width="1"/><line x1="846.24" y1="568.5" x2="846.24" y2="574.5" stroke="#dcdcdc" stroke-width="1"/><line x1="857.90" y1="568.5" x2="857.90" y2="571.5" stroke="#dcdcdc" stroke-width="1"/><line x1="869.57" y1="568.5" x2="869.57" y2="571.5" stroke="#dcdcdc" stroke-width="1"/><line x1="881.23" y1="568.5" x2="881.23" y2="571.5" stroke="#dcdcdc" stroke-width="1"/><line x1="892.90" y1="568.5" x2="892.90" y2="571.5" stroke="#dcdcdc" stroke-width="1"/><line x1="904.56" y1="568.5" x2="904.56" y2="574.5" stroke="#dcdcdc" stroke-width="1"/><line x1="916.22" y1="568.5" x2="916.22" y2="571.5" stroke="#dcdcdc" stroke-width="1"/><line x1="927.89" y1="568.5" x2="927.89" y2="571.5" stroke="#dcdcdc" stroke-width="1"/><line x1="939.55" y1="568.5" x2="939.55" y2="571.5" stroke="#dcdcdc" stroke-width="1"/><line x1="951.22" y1="568.5" x2="951.22" y2="571.5" stroke="#dcdcdc" stroke-width="1"/><line x1="962.88" y1="568.5" x2="962.88" y2="574.5" stroke="#dcdcdc" stroke-width="1"/><line x1="974.54" y1="568.5" x2="974.54" y2="571.5" stroke="#dcdcdc" stroke-width="1"/><line x1="986.21" y1="568.5" x2="986.21" y2="571.5" stroke="#dcdcdc" stroke-width="1"/><line x1="997.87" y1="568.5" x2="997.87" y2="571.5" stroke="#dcdcdc" stroke-width="1"/><line x1="1009.54" y1="568.5" x2="1009.54" y2="571.5" stroke="#dcdcdc" stroke-width="1"/><line x1="1021.20" y1="568.5" x2="1021.20" y2="574.5" stroke="#dcdcdc" stroke-width="1"/><line x1="1032.86" y1="568.5" x2="1032.86" y2="571.5" stroke="#dcdcdc" stroke-width="1"/><line x1="1044.53" y1="568.5" x2="1044.53" y2="571.5" stroke="#dcdcdc" stroke-width="1"/><line x1="1056.19" y1="568.5" x2="1056.19" y2="571.5" stroke="#dcdcdc" stroke-width="1"/><line x1="1067.86" y1="568.5" x2="1067.86" y2="571.5" stroke="#dcdcdc" stroke-width="1"/><line x1="1079.52" y1="568.5" x2="1079.52" y2="574.5" stroke="#dcdcdc" stroke-width="1"/><line x1="1091.18" y1="568.5" x2="1091.18" y2="571.5" stroke="#dcdcdc" stroke-width="1"/><line x1="1102.85" y1="568.5" x2="1102.85" y2="571.5" stroke="#dcdcdc" stroke-width="1"/><line x1="1114.51" y1="568.5" x2="1114.51" y2="571.5" stroke="#dcdcdc" stroke-width="1"/><line x1="1126.18" y1="568.5" x2="1126.18" y2="571.5" stroke="#dcdcdc" stroke-width="1"/><line x1="1137.84" y1="568.5" x2="1137.84" y2="574.5" stroke="#dcdcdc" stroke-width="1"/><line x1="1149.50" y1="568.5" x2="1149.50" y2="571.5" stroke="#dcdcdc" stroke-width="1"/><line x1="1161.17" y1="568.5" x2="1161.17" y2="571.5" stroke="#dcdcdc" stroke-width="1"/><line x1="1172.83" y1="568.5" x2="1172.83" y2="571.5" stroke="#dcdcdc" stroke-width="1"/><line x1="1184.50" y1="568.5" x2="1184.50" y2="571.5" stroke="#dcdcdc" stroke-width="1"/><line x1="1196.16" y1="568.5" x2="1196.16" y2="574.5" stroke="#dcdcdc" stroke-width="1"/><line x1="1207.82" y1="568.5" x2="1207.82" y2="571.5" stroke="#dcdcdc" stroke-width="1"/><line x1="1219.49" y1="568.5" x2="1219.49" y2="571.5" stroke="#dcdcdc" stroke-width="1"/><line x1="1231.15" y1="568.5" x2="1231.15" y2="571.5" stroke="#dcdcdc" stroke-width="1"/><line x1="1242.82" y1="568.5" x2="1242.82" y2="571.5" stroke="#dcdcdc" stroke-width="1"/><line x1="1254.48" y1="568.5" x2="1254.48" y2="574.5" stroke="#dcdcdc" stroke-width="1"/><line x1="1266.14" y1="568.5" x2="1266.14" y2="571.5" stroke="#dcdcdc" stroke-width="1"/><line x1="1277.81" y1="568.5" x2="1277.81" y2="571.5" stroke="#dcdcdc" stroke-width="1"/><line x1="1289.47" y1="568.5" x2="1289.47" y2="571.5" stroke="#dcdcdc" stroke-width="1"/><line x1="1301.14" y1="568.5" x2="1301.14" y2="571.5" stroke="#dcdcdc" stroke-width="1"/><line x1="1312.80" y1="568.5" x2="1312.80" y2="574.5" stroke="#dcdcdc" stroke-width="1"/><line x1="1324.46" y1="568.5" x2="1324.46" y2="571.5" stroke="#dcdcdc" stroke-width="1"/><line x1="1336.13" y1="568.5" x2="1336.13" y2="571.5" stroke="#dcdcdc" stroke-width="1"/><line x1="1347.79" y1="568.5" x2="1347.79" y2="571.5" stroke="#dcdcdc" stroke-width="1"/><line x1="1359.46" y1="568.5" x2="1359.46" y2="571.5" stroke="#dcdcdc" stroke-width="1"/><line x1="1371.12" y1="568.5" x2="1371.12" y2="574.5" stroke="#dcdcdc" stroke-width="1"/><line x1="1382.78" y1="568.5" x2="1382.78" y2="571.5" stroke="#dcdcdc" stroke-width="1"/><line x1="1394.45" y1="568.5" x2="1394.45" y2="571.5" stroke="#dcdcdc" stroke-width="1"/><line x1="1406.11" y1="568.5" x2="1406.11" y2="571.5" stroke="#dcdcdc" stroke-width="1"/><line x1="1417.78" y1="568.5" x2="1417.78" y2="571.5" stroke="#dcdcdc" stroke-width="1"/><line x1="1429.44" y1="568.5" x2="1429.44" y2="574.5" stroke="#dcdcdc" stroke-width="1"/><line x1="1441.10" y1="568.5" x2="1441.10" y2="571.5" stroke="#dcdcdc" stroke-width="1"/><line x1="1452.77" y1="568.5" x2="1452.77" y2="571.5" stroke="#dcdcdc" stroke-width="1"/><line x1="1464.43" y1="568.5" x2="1464.43" y2="571.5" stroke="#dcdcdc" stroke-width="1"/><line x1="1476.10" y1="568.5" x2="1476.10" y2="571.5" stroke="#dcdcdc" stroke-width="1"/><line x1="1487.76" y1="568.5" x2="1487.76" y2="574.5" stroke="#dcdcdc" stroke-width="1"/><line x1="1499.42" y1="568.5" x2="1499.42" y2="571.5" stroke="#dcdcdc" stroke-width="1"/><line x1="1511.09" y1="568.5" x2="1511.09" y2="571.5" stroke="#dcdcdc" stroke-width="1"/><line x1="1522.75" y1="568.5" x2="1522.75" y2="571.5" stroke="#dcdcdc" stroke-width="1"/><line x1="1534.42" y1="568.5" x2="1534.42" y2="571.5" stroke="#dcdcdc" stroke-width="1"/><line x1="1546.08" y1="568.5" x2="1546.08" y2="574.5" stroke="#dcdcdc" stroke-width="1"/><line x1="1557.74" y1="568.5" x2="1557.74" y2="571.5" stroke="#dcdcdc" stroke-width="1"/><line x1="1569.41" y1="568.5" x2="1569.41" y2="571.5" stroke="#dcdcdc" stroke-width="1"/><line x1="1581.07" y1="568.5" x2="1581.07" y2="571.5" stroke="#dcdcdc" stroke-width="1"/><line x1="1592.74" y1="568.5" x2="1592.74" y2="571.5" stroke="#dcdcdc" stroke-width="1"/><line x1="1604.40" y1="568.5" x2="1604.40" y2="574.5" stroke="#dcdcdc" stroke-width="1"/><line x1="1616.06" y1="568.5" x2="1616.06" y2="571.5" stroke="#dcdcdc" stroke-width="1"/><line x1="1627.73" y1="568.5" x2="1627.73" y2="571.5" stroke="#dcdcdc" stroke-width="1"/><line x1="1639.39" y1="568.5" x2="1639.39" y2="571.5" stroke="#dcdcdc" stroke-width="1"/><line x1="1651.06" y1="568.5" x2="1651.06" y2="571.5" stroke="#dcdcdc" stroke-width="1"/><line x1="1662.72" y1="568.5" x2="1662.72" y2="574.5" stroke="#dcdcdc" stroke-width="1"/><line x1="1674.38" y1="568.5" x2="1674.38" y2="571.5" stroke="#dcdcdc" stroke-width="1"/><line x1="1686.05" y1="568.5" x2="1686.05" y2="571.5" stroke="#dcdcdc" stroke-width="1"/><polyline fill="none" stroke="#2f8b9e" stroke-width="2" stroke-linejoin="round" points="758.7,507.0 787.5,481.2 816.6,478.5 846.2,482.4 874.6,481.9 904.1,484.1 933.1,472.9 962.4,475.0 991.4,467.0 1020.6,439.0 1049.8,456.7 1079.1,449.2 1108.1,440.0 1137.0,456.0 1165.8,454.6 1195.4,447.5 1224.3,447.8 1254.0,427.2 1282.8,337.1 1311.7,335.4 1341.2,354.0 1370.6,458.0 1399.8,439.4 1428.6,404.0 1457.5,413.4 1486.7,415.8 1515.9,396.2 1545.0,372.9 1574.2,371.2 1603.4,408.7 1632.6,520.9"/><rect x="1702.5" y="313.5" width="203.5" height="32.5" fill="#fff" stroke="#dadada" stroke-width="1"/><line x1="1711.5" y1="329.5" x2="1729.7" y2="329.5" stroke="#2f8b9e" stroke-width="1"/><rect x="700.5" y="625.5" width="1037.0" height="283.0" fill="#fff" stroke="#dcdcdc" stroke-width="1"/><line x1="695" y1="908.5" x2="1737.5" y2="908.5" stroke="#e3e3e3" stroke-width="1"/><line x1="697.5" y1="899.2" x2="700.5" y2="899.2" stroke="#dcdcdc" stroke-width="1"/><line x1="697.5" y1="889.8" x2="700.5" y2="889.8" stroke="#dcdcdc" stroke-width="1"/><line x1="695" y1="880.5" x2="1737.5" y2="880.5" stroke="#e3e3e3" stroke-width="1"/><line x1="697.5" y1="871.2" x2="700.5" y2="871.2" stroke="#dcdcdc" stroke-width="1"/><line x1="697.5" y1="861.8" x2="700.5" y2="861.8" stroke="#dcdcdc" stroke-width="1"/><line x1="695" y1="852.5" x2="1737.5" y2="852.5" stroke="#e3e3e3" stroke-width="1"/><line x1="697.5" y1="843.2" x2="700.5" y2="843.2" stroke="#dcdcdc" stroke-width="1"/><line x1="697.5" y1="833.8" x2="700.5" y2="833.8" stroke="#dcdcdc" stroke-width="1"/><line x1="695" y1="824.5" x2="1737.5" y2="824.5" stroke="#e3e3e3" stroke-width="1"/><line x1="697.5" y1="815.2" x2="700.5" y2="815.2" stroke="#dcdcdc" stroke-width="1"/><line x1="697.5" y1="805.8" x2="700.5" y2="805.8" stroke="#dcdcdc" stroke-width="1"/><line x1="695" y1="796.5" x2="1737.5" y2="796.5" stroke="#e3e3e3" stroke-width="1"/><line x1="697.5" y1="787.2" x2="700.5" y2="787.2" stroke="#dcdcdc" stroke-width="1"/><line x1="697.5" y1="777.8" x2="700.5" y2="777.8" stroke="#dcdcdc" stroke-width="1"/><line x1="695" y1="768.5" x2="1737.5" y2="768.5" stroke="#e3e3e3" stroke-width="1"/><line x1="697.5" y1="759.2" x2="700.5" y2="759.2" stroke="#dcdcdc" stroke-width="1"/><line x1="697.5" y1="749.8" x2="700.5" y2="749.8" stroke="#dcdcdc" stroke-width="1"/><line x1="695" y1="740.5" x2="1737.5" y2="740.5" stroke="#e3e3e3" stroke-width="1"/><line x1="697.5" y1="731.2" x2="700.5" y2="731.2" stroke="#dcdcdc" stroke-width="1"/><line x1="697.5" y1="721.8" x2="700.5" y2="721.8" stroke="#dcdcdc" stroke-width="1"/><line x1="695" y1="712.5" x2="1737.5" y2="712.5" stroke="#e3e3e3" stroke-width="1"/><line x1="697.5" y1="703.2" x2="700.5" y2="703.2" stroke="#dcdcdc" stroke-width="1"/><line x1="697.5" y1="693.8" x2="700.5" y2="693.8" stroke="#dcdcdc" stroke-width="1"/><line x1="695" y1="684.5" x2="1737.5" y2="684.5" stroke="#e3e3e3" stroke-width="1"/><line x1="697.5" y1="675.2" x2="700.5" y2="675.2" stroke="#dcdcdc" stroke-width="1"/><line x1="697.5" y1="665.8" x2="700.5" y2="665.8" stroke="#dcdcdc" stroke-width="1"/><line x1="695" y1="656.5" x2="1737.5" y2="656.5" stroke="#e3e3e3" stroke-width="1"/><line x1="697.5" y1="647.2" x2="700.5" y2="647.2" stroke="#dcdcdc" stroke-width="1"/><line x1="697.5" y1="637.8" x2="700.5" y2="637.8" stroke="#dcdcdc" stroke-width="1"/><line x1="695" y1="628.5" x2="1737.5" y2="628.5" stroke="#e3e3e3" stroke-width="1"/><line x1="735.4" y1="908.5" x2="735.4" y2="911.5" stroke="#dcdcdc" stroke-width="1"/><line x1="804.5" y1="908.5" x2="804.5" y2="911.5" stroke="#dcdcdc" stroke-width="1"/><line x1="873.6" y1="908.5" x2="873.6" y2="914.5" stroke="#dcdcdc" stroke-width="1"/><line x1="942.7" y1="908.5" x2="942.7" y2="911.5" stroke="#dcdcdc" stroke-width="1"/><line x1="1011.8" y1="908.5" x2="1011.8" y2="911.5" stroke="#dcdcdc" stroke-width="1"/><line x1="1081.0" y1="908.5" x2="1081.0" y2="911.5" stroke="#dcdcdc" stroke-width="1"/><line x1="1150.1" y1="908.5" x2="1150.1" y2="911.5" stroke="#dcdcdc" stroke-width="1"/><line x1="1219.2" y1="908.5" x2="1219.2" y2="914.5" stroke="#dcdcdc" stroke-width="1"/><line x1="1288.3" y1="908.5" x2="1288.3" y2="911.5" stroke="#dcdcdc" stroke-width="1"/><line x1="1357.4" y1="908.5" x2="1357.4" y2="911.5" stroke="#dcdcdc" stroke-width="1"/><line x1="1426.6" y1="908.5" x2="1426.6" y2="911.5" stroke="#dcdcdc" stroke-width="1"/><line x1="1495.7" y1="908.5" x2="1495.7" y2="911.5" stroke="#dcdcdc" stroke-width="1"/><line x1="1564.8" y1="908.5" x2="1564.8" y2="914.5" stroke="#dcdcdc" stroke-width="1"/><line x1="1633.9" y1="908.5" x2="1633.9" y2="911.5" stroke="#dcdcdc" stroke-width="1"/><line x1="1703.0" y1="908.5" x2="1703.0" y2="911.5" stroke="#dcdcdc" stroke-width="1"/><rect x="769.0" y="650.8" width="207.8" height="257.2" fill="#3a8fa6"/><rect x="1114.9" y="696.5" width="207.1" height="211.5" fill="#3a8fa6"/><rect x="1460.6" y="712.3" width="207.2" height="195.7" fill="#3a8fa6"/><rect x="1748.5" y="625.5" width="158" height="32.7" fill="#fff" stroke="#dadada" stroke-width="1"/><rect x="1758.6" y="635.6" width="17" height="12.8" fill="#3a8fa6"/></svg>
<div class="t" style="left:86.00px;top:20px;font-size:11.5px;line-height:11.5px;color:#ffffff;letter-spacing:-0.284px;">Consumi Energetici - BusinessLog ::: 2.25.1.24 ::: ASUS G18 LUCA</div>
<div class="t" style="left:768.00px;top:20px;font-size:11.5px;line-height:11.5px;color:#0f5fb0;letter-spacing:-0.738px;">Cerca</div>
<div class="t" style="left:93.00px;top:68px;font-size:13.2px;line-height:13.2px;color:#1b1b1b;">Principale</div>
<div class="t" style="left:216.00px;top:68px;font-size:13.2px;line-height:13.2px;color:#111;font-weight:bold;letter-spacing:-0.129px;">Elenchi</div>
<div class="t" style="left:324.00px;top:68px;font-size:13.2px;line-height:13.2px;color:#1b1b1b;letter-spacing:0.351px;">Strumenti</div>
<div class="t" style="left:38.73px;top:158px;font-size:11.3px;line-height:11.3px;color:#1f1f1f;">Elenco</div>
<div class="t" style="left:31.82px;top:171px;font-size:11.3px;line-height:11.3px;color:#1f1f1f;">Macchine</div>
<div class="t" style="left:96.19px;top:158px;font-size:11.3px;line-height:11.3px;color:#1f1f1f;">Inventario</div>
<div class="t" style="left:98.70px;top:171px;font-size:11.3px;line-height:11.3px;color:#1f1f1f;">Software</div>
<div class="t" style="left:162.19px;top:158px;font-size:11.3px;line-height:11.3px;color:#1f1f1f;">Inventario</div>
<div class="t" style="left:162.51px;top:171px;font-size:11.3px;line-height:11.3px;color:#1f1f1f;">Hardware</div>
<div class="t" style="left:229.71px;top:158px;font-size:11.3px;line-height:11.3px;color:#1f1f1f;">Consumi</div>
<div class="t" style="left:226.88px;top:171px;font-size:11.3px;line-height:11.3px;color:#1f1f1f;">Energetici</div>
<div class="t" style="left:291.75px;top:158px;font-size:11.3px;line-height:11.3px;color:#1f1f1f;letter-spacing:0.280px;">Aggiornamenti</div>
<div class="t" style="left:309.59px;top:171px;font-size:11.3px;line-height:11.3px;color:#1f1f1f;">Sistema</div>
<div class="t" style="left:384.30px;top:158px;font-size:11.3px;line-height:11.3px;color:#1f1f1f;">Eventi</div>
<div class="t" style="left:384.30px;top:171px;font-size:11.3px;line-height:11.3px;color:#1f1f1f;">Interni</div>
<div class="t" style="left:434.73px;top:158px;font-size:11.3px;line-height:11.3px;color:#1f1f1f;">Elenco Log</div>
<div class="t" style="left:431.91px;top:171px;font-size:11.3px;line-height:11.3px;color:#1f1f1f;">Esportazioni</div>
<div class="t" style="left:508.94px;top:158px;font-size:11.3px;line-height:11.3px;color:#1f1f1f;">Visualizzatore</div>
<div class="t" style="left:527.05px;top:171px;font-size:11.3px;line-height:11.3px;color:#1f1f1f;">Archivi</div>
<div class="t" style="left:611.01px;top:158px;font-size:11.3px;line-height:11.3px;color:#1f1f1f;">Invia Comando</div>
<div class="t" style="left:620.42px;top:171px;font-size:11.3px;line-height:11.3px;color:#1f1f1f;">PowerShell</div>
<div class="t" style="left:700.29px;top:158px;font-size:11.3px;line-height:11.3px;color:#1f1f1f;">Comandi PS</div>
<div class="t" style="left:717.55px;top:171px;font-size:11.3px;line-height:11.3px;color:#1f1f1f;">inviati</div>
<div class="t" style="left:789.73px;top:158px;font-size:11.3px;line-height:11.3px;color:#1f1f1f;">Elenco</div>
<div class="t" style="left:774.98px;top:171px;font-size:11.3px;line-height:11.3px;color:#1f1f1f;">Template PS</div>
<div class="t" style="left:867.85px;top:158px;font-size:11.3px;line-height:11.3px;color:#1f1f1f;">Log Accessi</div>
<div class="t" style="left:938.85px;top:158px;font-size:11.3px;line-height:11.3px;color:#1f1f1f;">Log Accessi</div>
<div class="t" style="left:957.07px;top:171px;font-size:11.3px;line-height:11.3px;color:#1f1f1f;">Files</div>
<div class="t" style="left:1025.73px;top:158px;font-size:11.3px;line-height:11.3px;color:#1f1f1f;">Elenco</div>
<div class="t" style="left:1013.55px;top:171px;font-size:11.3px;line-height:11.3px;color:#1f1f1f;letter-spacing:-0.582px;">Accessi USB</div>
<div class="t" style="left:1088.44px;top:158px;font-size:11.3px;line-height:11.3px;color:#1f1f1f;">Log Audit</div>
<div class="t" style="left:1085.62px;top:171px;font-size:11.3px;line-height:11.3px;color:#1f1f1f;">Sql Server</div>
<div class="t" style="left:1149.34px;top:158px;font-size:11.3px;line-height:11.3px;color:#1f1f1f;">Log Processi</div>
<div class="t" style="left:1227.54px;top:158px;font-size:11.3px;line-height:11.3px;color:#1f1f1f;">Log Stampe</div>
<div class="t" style="left:1302.05px;top:158px;font-size:11.3px;line-height:11.3px;color:#1f1f1f;letter-spacing:-0.292px;">Elenco Accessi</div>
<div class="t" style="left:1324.81px;top:171px;font-size:11.3px;line-height:11.3px;color:#1f1f1f;">Falliti</div>
<div class="t" style="left:1388.73px;top:158px;font-size:11.3px;line-height:11.3px;color:#1f1f1f;">Elenco</div>
<div class="t" style="left:1387.16px;top:171px;font-size:11.3px;line-height:11.3px;color:#1f1f1f;">SysLog</div>
<div class="t" style="left:1438.00px;top:158px;font-size:11.3px;line-height:11.3px;color:#1f1f1f;letter-spacing:0.101px;">Log Antivirus</div>
<div class="t" style="left:1565.54px;top:158px;font-size:11.3px;line-height:11.3px;color:#1f1f1f;">Vista</div>
<div class="t" style="left:1535.65px;top:171px;font-size:11.3px;line-height:11.3px;color:#1f1f1f;letter-spacing:0.247px;">Macchine/Utenti</div>
<div class="t" style="left:1634.65px;top:158px;font-size:11.3px;line-height:11.3px;color:#1f1f1f;letter-spacing:0.115px;">Elenco Utenti</div>
<div class="t" style="left:1654.23px;top:171px;font-size:11.3px;line-height:11.3px;color:#1f1f1f;">Locali</div>
<div class="t" style="left:1739.50px;top:112px;font-size:11.3px;line-height:11.3px;color:#1f1f1f;letter-spacing:-0.126px;">Elenco Sessioni</div>
<div class="t" style="left:1739.50px;top:142px;font-size:11.3px;line-height:11.3px;color:#1f1f1f;letter-spacing:0.090px;">Elenco Condivisioni</div>
<div class="t" style="left:1739.50px;top:172px;font-size:11.3px;line-height:11.3px;color:#1f1f1f;letter-spacing:0.186px;">Orari Utenti</div>
<div class="t" style="left:289.61px;top:199px;font-size:11.3px;line-height:11.3px;color:#8c8c8c;">Azioni</div>
<div class="t" style="left:694.42px;top:199px;font-size:11.3px;line-height:11.3px;color:#8c8c8c;">PowerShell</div>
<div class="t" style="left:1158.05px;top:199px;font-size:11.3px;line-height:11.3px;color:#8c8c8c;">Archivi Log</div>
<div class="t" style="left:1674.54px;top:199px;font-size:11.3px;line-height:11.3px;color:#8c8c8c;">Viste</div>
<div class="t" style="left:892.16px;top:101px;font-size:10.5px;line-height:10.5px;color:#fff;font-weight:bold;">35</div>
<div class="t" style="left:964.16px;top:101px;font-size:10.5px;line-height:10.5px;color:#fff;font-weight:bold;">12</div>
<div class="t" style="left:1469.08px;top:101px;font-size:10.5px;line-height:10.5px;color:#fff;font-weight:bold;">6</div>
<div class="t" style="left:23.40px;top:228px;font-size:11.5px;line-height:11.5px;color:#1b1b1b;letter-spacing:-0.132px;">Elenco Macchine</div>
<div class="t" style="left:158.00px;top:228px;font-size:11.5px;line-height:11.5px;color:#1b1b1b;letter-spacing:-0.202px;">Log Stampe</div>
<div class="t" style="left:267.00px;top:228px;font-size:11.5px;line-height:11.5px;color:#1b1b1b;letter-spacing:-0.427px;">Elenco Accessi USB</div>
<div class="t" style="left:413.00px;top:228px;font-size:11.5px;line-height:11.5px;color:#1b1b1b;letter-spacing:0.074px;">Inventario Software</div>
<div class="t" style="left:563.00px;top:228px;font-size:11.5px;line-height:11.5px;color:#1b1b1b;letter-spacing:0.055px;">Inventario Hardware</div>
<div class="t" style="left:717.50px;top:227px;font-size:11.5px;line-height:11.5px;color:#1a73c4;letter-spacing:-0.068px;">Consumi Energetici</div>
<div class="t" style="left:865.00px;top:228px;font-size:11.5px;line-height:11.5px;color:#1b1b1b;letter-spacing:-0.019px;">Aggiornamenti Sistema</div>
<div class="t" style="left:1033.00px;top:228px;font-size:11.5px;line-height:11.5px;color:#1b1b1b;letter-spacing:-0.440px;">Elenco SysLog</div>
<div class="t" style="left:1154.00px;top:228px;font-size:11.5px;line-height:11.5px;color:#1b1b1b;letter-spacing:-0.094px;">Allarmi Eventi</div>
<div class="t" style="left:1272.00px;top:228px;font-size:11.5px;line-height:11.5px;color:#1b1b1b;letter-spacing:-0.202px;">Allarmi Files</div>
<div class="t" style="left:1382.00px;top:228px;font-size:11.5px;line-height:11.5px;color:#1b1b1b;letter-spacing:-0.014px;">Allarmi Software</div>
<div class="t" style="left:1515.00px;top:228px;font-size:11.5px;line-height:11.5px;color:#1b1b1b;letter-spacing:-0.345px;">Log Accessi Files</div>
<div class="t" style="left:1647.60px;top:228px;font-size:11.5px;line-height:11.5px;color:#1b1b1b;letter-spacing:0.042px;">Log Antivirus</div>
<div class="t" style="left:1764.00px;top:228px;font-size:11.5px;line-height:11.5px;color:#1b1b1b;letter-spacing:0.067px;">Controllo Files</div>
<div class="t" style="left:73.00px;top:269px;font-size:11.5px;line-height:11.5px;color:#1b1b1b;letter-spacing:-0.384px;">Esci</div>
<div class="t" style="left:147.00px;top:269px;font-size:11.5px;line-height:11.5px;color:#1b1b1b;letter-spacing:-0.092px;">Esporta</div>
<div class="t" style="left:252.00px;top:269px;font-size:11.5px;line-height:11.5px;color:#1b1b1b;letter-spacing:-0.326px;">Refresh</div>
<div class="t" style="left:343.00px;top:269px;font-size:11.5px;line-height:11.5px;color:#1b1b1b;letter-spacing:0.182px;">Hybernate</div>
<div class="t" style="left:59.00px;top:313px;font-size:11.5px;line-height:11.5px;color:#1b1b1b;">PC</div>
<div class="t" style="left:155.00px;top:313px;font-size:11.5px;line-height:11.5px;color:#1b1b1b;">Cpu</div>
<div class="t" style="left:226.00px;top:313px;font-size:11.5px;line-height:11.5px;color:#1b1b1b;">Gpu</div>
<div class="t" style="left:293.00px;top:313px;font-size:11.5px;line-height:11.5px;color:#1b1b1b;">Ram</div>
<div class="t" style="left:356.00px;top:313px;font-size:11.5px;line-height:11.5px;color:#1b1b1b;">Disk</div>
<div class="t" style="left:421.00px;top:313px;font-size:11.5px;line-height:11.5px;color:#1b1b1b;">Total...</div>
<div class="t" style="left:491.30px;top:313px;font-size:11.5px;line-height:11.5px;color:#1b1b1b;">Ultima rilevazione</div>
<div class="t" style="left:40.40px;top:343px;font-size:11.5px;line-height:11.5px;color:#1b1b1b;letter-spacing:0.179px;">localhost</div>
<div class="t" style="left:163.10px;top:343px;font-size:11.5px;line-height:11.5px;color:#1b1b1b;letter-spacing:-0.316px;">14,44</div>
<div class="t" style="left:237.10px;top:343px;font-size:11.5px;line-height:11.5px;color:#1b1b1b;letter-spacing:-0.298px;">4,96</div>
<div class="t" style="left:294.30px;top:343px;font-size:11.5px;line-height:11.5px;color:#1b1b1b;letter-spacing:-0.316px;">48,18</div>
<div class="t" style="left:365.20px;top:343px;font-size:11.5px;line-height:11.5px;color:#1b1b1b;letter-spacing:-0.298px;">0,08</div>
<div class="t" style="left:423.10px;top:343px;font-size:11.5px;line-height:11.5px;color:#1b1b1b;letter-spacing:-0.331px;">130,02</div>
<div class="t" style="left:472.80px;top:343px;font-size:11.5px;line-height:11.5px;color:#1b1b1b;letter-spacing:-0.321px;">10/10/2025 09:51</div>
<div class="t" style="left:40.40px;top:372px;font-size:11.5px;line-height:11.5px;color:#1b1b1b;letter-spacing:-0.254px;">server-x</div>
<div class="t" style="left:169.10px;top:372px;font-size:11.5px;line-height:11.5px;color:#1b1b1b;letter-spacing:-0.298px;">3,75</div>
<div class="t" style="left:237.10px;top:372px;font-size:11.5px;line-height:11.5px;color:#1b1b1b;letter-spacing:-0.298px;">1,18</div>
<div class="t" style="left:294.30px;top:372px;font-size:11.5px;line-height:11.5px;color:#1b1b1b;letter-spacing:-0.316px;">67,47</div>
<div class="t" style="left:365.20px;top:372px;font-size:11.5px;line-height:11.5px;color:#1b1b1b;letter-spacing:-0.298px;">0,03</div>
<div class="t" style="left:429.10px;top:372px;font-size:11.5px;line-height:11.5px;color:#1b1b1b;letter-spacing:-0.316px;">93,91</div>
<div class="t" style="left:472.80px;top:372px;font-size:11.5px;line-height:11.5px;color:#1b1b1b;letter-spacing:-0.321px;">10/10/2025 09:49</div>
<div class="t" style="left:40.40px;top:401px;font-size:11.5px;line-height:11.5px;color:#1b1b1b;letter-spacing:-0.216px;">asus18</div>
<div class="t" style="left:163.10px;top:401px;font-size:11.5px;line-height:11.5px;color:#1b1b1b;letter-spacing:-0.316px;">14,63</div>
<div class="t" style="left:237.10px;top:401px;font-size:11.5px;line-height:11.5px;color:#1b1b1b;letter-spacing:-0.298px;">5,26</div>
<div class="t" style="left:294.30px;top:401px;font-size:11.5px;line-height:11.5px;color:#1b1b1b;letter-spacing:-0.316px;">49,61</div>
<div class="t" style="left:365.20px;top:401px;font-size:11.5px;line-height:11.5px;color:#1b1b1b;letter-spacing:-0.298px;">0,09</div>
<div class="t" style="left:423.10px;top:401px;font-size:11.5px;line-height:11.5px;color:#1b1b1b;letter-spacing:-0.331px;">133,13</div>
<div class="t" style="left:472.80px;top:401px;font-size:11.5px;line-height:11.5px;color:#1b1b1b;letter-spacing:-0.321px;">10/10/2025 09:46</div>
<div class="t" style="left:40.40px;top:430px;font-size:11.5px;line-height:11.5px;color:#1b1b1b;letter-spacing:-0.695px;">LUCAWORKST...</div>
<div class="t" style="left:169.10px;top:430px;font-size:11.5px;line-height:11.5px;color:#1b1b1b;letter-spacing:-0.298px;">6,54</div>
<div class="t" style="left:237.10px;top:430px;font-size:11.5px;line-height:11.5px;color:#1b1b1b;letter-spacing:-0.298px;">3,59</div>
<div class="t" style="left:294.30px;top:430px;font-size:11.5px;line-height:11.5px;color:#1b1b1b;letter-spacing:-0.316px;">19,38</div>
<div class="t" style="left:365.20px;top:430px;font-size:11.5px;line-height:11.5px;color:#1b1b1b;letter-spacing:-0.298px;">0,01</div>
<div class="t" style="left:429.10px;top:430px;font-size:11.5px;line-height:11.5px;color:#1b1b1b;letter-spacing:-0.316px;">49,53</div>
<div class="t" style="left:472.80px;top:430px;font-size:11.5px;line-height:11.5px;color:#1b1b1b;letter-spacing:-0.321px;">22/07/2025 00:55</div>
<div class="t" style="left:40.40px;top:459px;font-size:11.5px;line-height:11.5px;color:#1b1b1b;letter-spacing:-0.541px;">LAPTOP-M26V...</div>
<div class="t" style="left:163.10px;top:459px;font-size:11.5px;line-height:11.5px;color:#1b1b1b;letter-spacing:-0.316px;">12,14</div>
<div class="t" style="left:237.10px;top:459px;font-size:11.5px;line-height:11.5px;color:#1b1b1b;letter-spacing:-0.298px;">4,21</div>
<div class="t" style="left:294.30px;top:459px;font-size:11.5px;line-height:11.5px;color:#1b1b1b;letter-spacing:-0.316px;">13,26</div>
<div class="t" style="left:365.20px;top:459px;font-size:11.5px;line-height:11.5px;color:#1b1b1b;letter-spacing:-0.298px;">0,07</div>
<div class="t" style="left:429.10px;top:459px;font-size:11.5px;line-height:11.5px;color:#1b1b1b;letter-spacing:-0.316px;">49,69</div>
<div class="t" style="left:472.80px;top:459px;font-size:11.5px;line-height:11.5px;color:#1b1b1b;letter-spacing:-0.321px;">30/06/2025 22:58</div>
<div class="t" style="left:40.40px;top:488px;font-size:11.5px;line-height:11.5px;color:#1b1b1b;letter-spacing:-0.505px;">WINDOWSSE...</div>
<div class="t" style="left:169.10px;top:488px;font-size:11.5px;line-height:11.5px;color:#1b1b1b;letter-spacing:-0.298px;">5,34</div>
<div class="t" style="left:237.10px;top:488px;font-size:11.5px;line-height:11.5px;color:#1b1b1b;letter-spacing:-0.298px;">1,54</div>
<div class="t" style="left:300.30px;top:488px;font-size:11.5px;line-height:11.5px;color:#1b1b1b;letter-spacing:-0.298px;">6,94</div>
<div class="t" style="left:365.20px;top:488px;font-size:11.5px;line-height:11.5px;color:#1b1b1b;letter-spacing:-0.298px;">0,02</div>
<div class="t" style="left:429.10px;top:488px;font-size:11.5px;line-height:11.5px;color:#1b1b1b;letter-spacing:-0.316px;">33,84</div>
<div class="t" style="left:472.80px;top:488px;font-size:11.5px;line-height:11.5px;color:#1b1b1b;letter-spacing:-0.321px;">20/03/2025 10:24</div>
<div class="t" style="left:159.60px;top:908px;font-size:11.5px;line-height:11.5px;color:#1b1b1b;letter-spacing:-0.316px;">56,84</div>
<div class="t" style="left:227.90px;top:908px;font-size:11.5px;line-height:11.5px;color:#1b1b1b;letter-spacing:-0.316px;">20,75</div>
<div class="t" style="left:284.80px;top:908px;font-size:11.5px;line-height:11.5px;color:#1b1b1b;letter-spacing:-0.331px;">204,85</div>
<div class="t" style="left:361.90px;top:908px;font-size:11.5px;line-height:11.5px;color:#1b1b1b;letter-spacing:-0.298px;">0,29</div>
<div class="t" style="left:419.70px;top:908px;font-size:11.5px;line-height:11.5px;color:#1b1b1b;letter-spacing:-0.331px;">490,12</div>
<div class="t" style="left:67.00px;top:961px;font-size:11.8px;line-height:11.8px;color:#1b1b1b;">Vengono visualizzati i consumi medi, espressi i Watt/ora, per ogni PC presente nel sistema. NB: I consumi sono STIMATI in base ai dati di utilizzo dei vari componenti</div>
<div class="t" style="left:31.30px;top:1009px;font-size:11.5px;line-height:11.5px;color:#1b1b1b;letter-spacing:-0.181px;">Versione : 2.25.1.24</div>
<div class="t" style="left:165.20px;top:1009px;font-size:11.5px;line-height:11.5px;color:#1b1b1b;letter-spacing:-0.863px;">Licenza : ENTERPRISE X</div>
<div class="t" style="left:315.00px;top:1009px;font-size:11.5px;line-height:11.5px;color:#1b1b1b;letter-spacing:-0.034px;">Nodi: 116 / 9999</div>
<div class="t" style="left:433.30px;top:1009px;font-size:11.5px;line-height:11.5px;color:#1b1b1b;letter-spacing:-0.262px;">Scadenza : 15/07/2388</div>
<div class="t" style="left:581.00px;top:1009px;font-size:11.5px;line-height:11.5px;color:#1b1b1b;letter-spacing:-0.119px;">DB Working: (1.4.2.7): 21,48 Mb</div>
<div class="t" style="left:777.00px;top:1009px;font-size:11.5px;line-height:11.5px;color:#1b1b1b;letter-spacing:-0.263px;">C:\ 495 Gb</div>
<div class="t" style="left:868.00px;top:1009px;font-size:11.5px;line-height:11.5px;color:#1b1b1b;letter-spacing:0.086px;">Utente : admin</div>
<div class="t" style="left:1492.90px;top:1009px;font-size:11.5px;line-height:11.5px;color:#1b1b1b;font-weight:bold;letter-spacing:-0.293px;">In arrivo: 0</div>
<div class="t" style="left:1582.80px;top:1009px;font-size:11.5px;line-height:11.5px;color:#1b1b1b;font-weight:bold;letter-spacing:-0.369px;">In coda: 0</div>
<div class="t" style="left:1667.90px;top:1009px;font-size:11.5px;line-height:11.5px;color:#1b1b1b;font-weight:bold;letter-spacing:-0.545px;">In Processo: 0</div>
<div class="t" style="left:1774.00px;top:1009px;font-size:11.5px;line-height:11.5px;color:#1b1b1b;letter-spacing:-0.244px;">Skin</div>
<div class="t" style="left:1843.00px;top:1009px;font-size:11.5px;line-height:11.5px;color:#1b1b1b;letter-spacing:0.031px;">Made in Italy</div>
<div class="t" style="left:662.35px;top:564px;font-size:10.7px;line-height:10.7px;color:#222;">0 Wh</div>
<div class="t" style="left:644.52px;top:525px;font-size:10.7px;line-height:10.7px;color:#222;">1000 Wh</div>
<div class="t" style="left:644.52px;top:486px;font-size:10.7px;line-height:10.7px;color:#222;">2000 Wh</div>
<div class="t" style="left:644.52px;top:446px;font-size:10.7px;line-height:10.7px;color:#222;">3000 Wh</div>
<div class="t" style="left:644.52px;top:407px;font-size:10.7px;line-height:10.7px;color:#222;">4000 Wh</div>
<div class="t" style="left:644.52px;top:368px;font-size:10.7px;line-height:10.7px;color:#222;">5000 Wh</div>
<div class="t" style="left:644.52px;top:329px;font-size:10.7px;line-height:10.7px;color:#222;">6000 Wh</div>
<div class="t" style="left:716.23px;top:580px;font-size:10.7px;line-height:10.7px;color:#222;">09/09</div>
<div class="t" style="left:774.94px;top:580px;font-size:10.7px;line-height:10.7px;color:#222;">11/09</div>
<div class="t" style="left:832.87px;top:580px;font-size:10.7px;line-height:10.7px;color:#222;">13/09</div>
<div class="t" style="left:891.18px;top:580px;font-size:10.7px;line-height:10.7px;color:#222;">15/09</div>
<div class="t" style="left:949.51px;top:580px;font-size:10.7px;line-height:10.7px;color:#222;">17/09</div>
<div class="t" style="left:1007.83px;top:580px;font-size:10.7px;line-height:10.7px;color:#222;">19/09</div>
<div class="t" style="left:1066.14px;top:580px;font-size:10.7px;line-height:10.7px;color:#222;">21/09</div>
<div class="t" style="left:1124.47px;top:580px;font-size:10.7px;line-height:10.7px;color:#222;">23/09</div>
<div class="t" style="left:1182.79px;top:580px;font-size:10.7px;line-height:10.7px;color:#222;">25/09</div>
<div class="t" style="left:1241.11px;top:580px;font-size:10.7px;line-height:10.7px;color:#222;">27/09</div>
<div class="t" style="left:1299.43px;top:580px;font-size:10.7px;line-height:10.7px;color:#222;">29/09</div>
<div class="t" style="left:1357.74px;top:580px;font-size:10.7px;line-height:10.7px;color:#222;">01/10</div>
<div class="t" style="left:1416.07px;top:580px;font-size:10.7px;line-height:10.7px;color:#222;">03/10</div>
<div class="t" style="left:1474.39px;top:580px;font-size:10.7px;line-height:10.7px;color:#222;">05/10</div>
<div class="t" style="left:1532.70px;top:580px;font-size:10.7px;line-height:10.7px;color:#222;">07/10</div>
<div class="t" style="left:1591.03px;top:580px;font-size:10.7px;line-height:10.7px;color:#222;">09/10</div>
<div class="t" style="left:1649.74px;top:580px;font-size:10.7px;line-height:10.7px;color:#222;">11/10</div>
<div class="t" style="left:1732.40px;top:325px;font-size:10.7px;line-height:10.7px;color:#222;letter-spacing:-0.118px;">Andamento Consumo Giornaliero</div>
<div class="t" style="left:662.35px;top:904px;font-size:10.7px;line-height:10.7px;color:#222;">0 Wh</div>
<div class="t" style="left:650.46px;top:876px;font-size:10.7px;line-height:10.7px;color:#222;">500 Wh</div>
<div class="t" style="left:644.52px;top:848px;font-size:10.7px;line-height:10.7px;color:#222;">1000 Wh</div>
<div class="t" style="left:644.52px;top:820px;font-size:10.7px;line-height:10.7px;color:#222;">1500 Wh</div>
<div class="t" style="left:644.52px;top:792px;font-size:10.7px;line-height:10.7px;color:#222;">2000 Wh</div>
<div class="t" style="left:644.52px;top:764px;font-size:10.7px;line-height:10.7px;color:#222;">2500 Wh</div>
<div class="t" style="left:644.52px;top:736px;font-size:10.7px;line-height:10.7px;color:#222;">3000 Wh</div>
<div class="t" style="left:644.52px;top:708px;font-size:10.7px;line-height:10.7px;color:#222;">3500 Wh</div>
<div class="t" style="left:644.52px;top:680px;font-size:10.7px;line-height:10.7px;color:#222;">4000 Wh</div>
<div class="t" style="left:644.52px;top:652px;font-size:10.7px;line-height:10.7px;color:#222;">4500 Wh</div>
<div class="t" style="left:644.52px;top:624px;font-size:10.7px;line-height:10.7px;color:#222;">5000 Wh</div>
<div class="t" style="left:848.00px;top:920px;font-size:10.7px;line-height:10.7px;color:#222;letter-spacing:-0.807px;">SERVER-X</div>
<div class="t" style="left:1199.50px;top:920px;font-size:10.7px;line-height:10.7px;color:#222;letter-spacing:0.089px;">asus18</div>
<div class="t" style="left:1541.50px;top:920px;font-size:10.7px;line-height:10.7px;color:#222;letter-spacing:0.090px;">localhost</div>
<div class="t" style="left:1778.60px;top:637px;font-size:10.7px;line-height:10.7px;color:#222;letter-spacing:-0.203px;">Consumo medio per PC</div>
</body></html>
